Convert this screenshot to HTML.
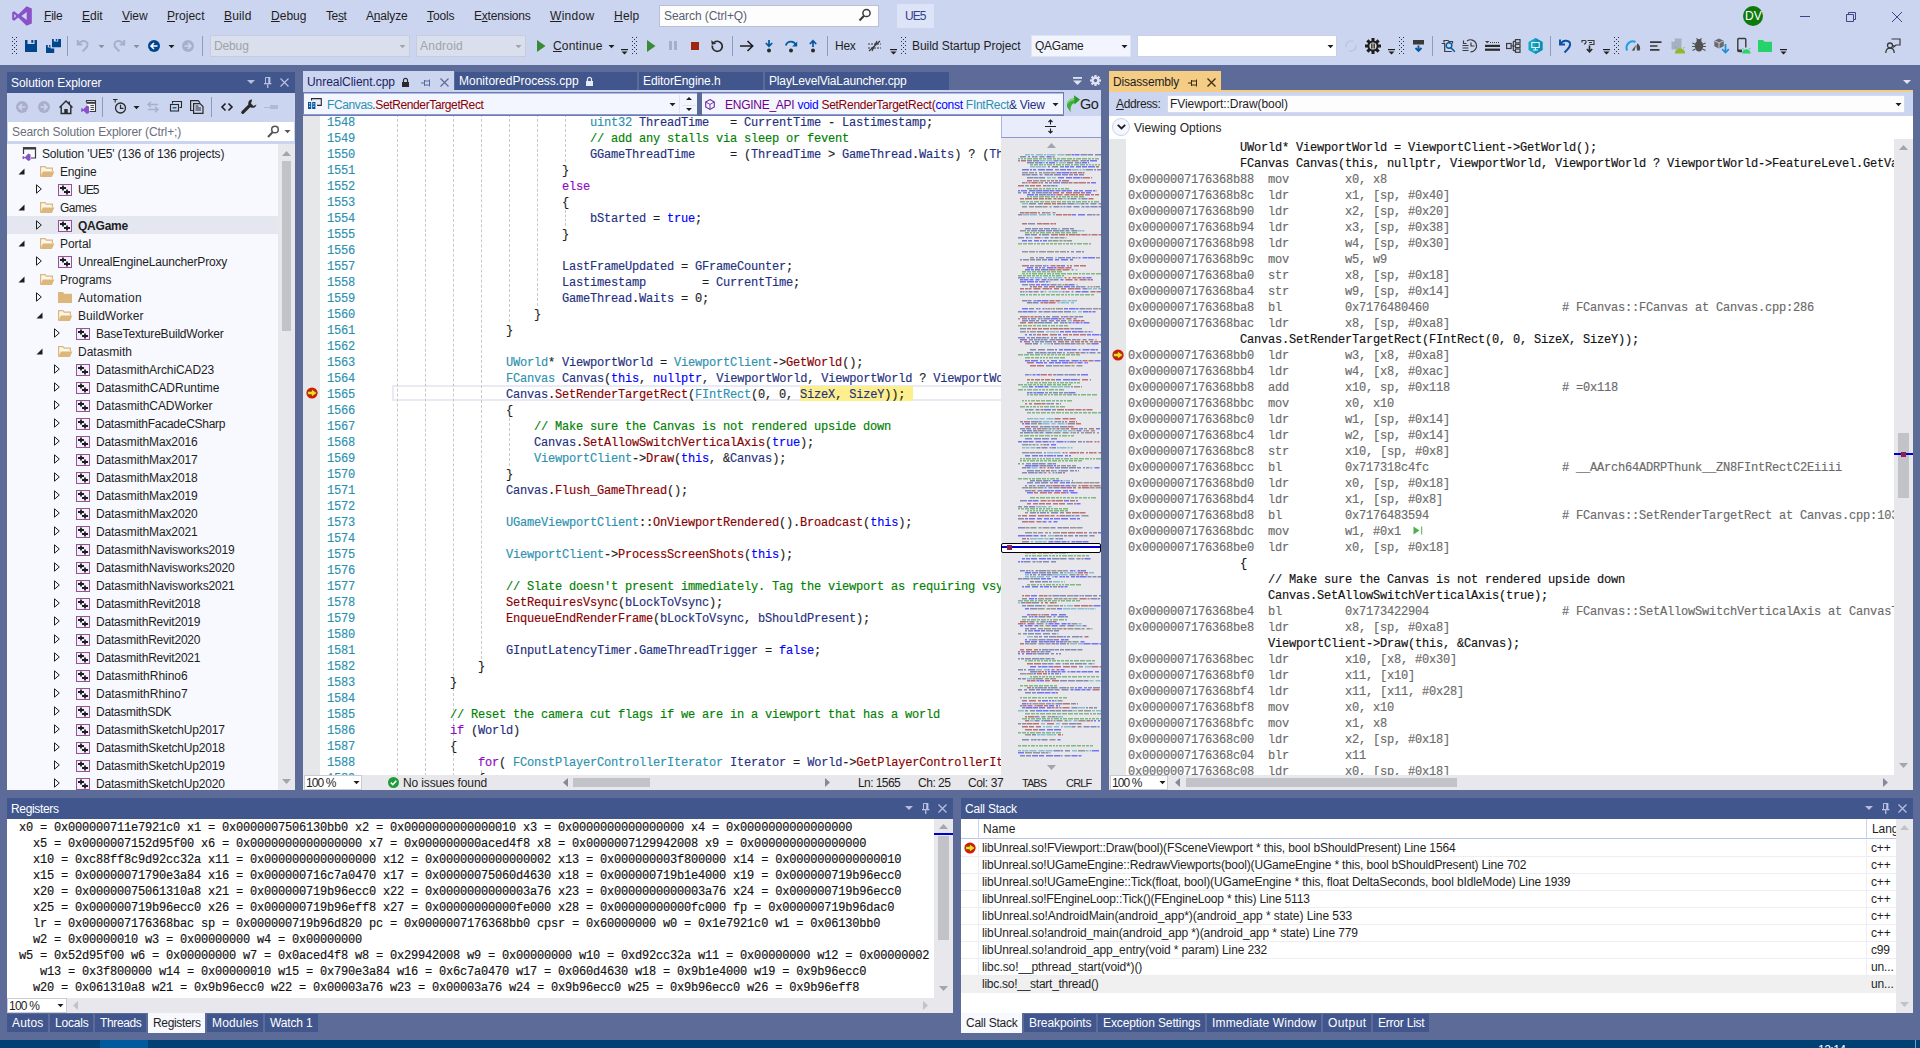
<!DOCTYPE html><html><head><meta charset="utf-8"><title>UE5 - Microsoft Visual Studio</title><style>
*{box-sizing:border-box;margin:0;padding:0}
html,body{width:1920px;height:1048px;overflow:hidden;background:#5d6b99}
body{position:relative;font-family:"Liberation Sans",sans-serif;font-size:12px;color:#1e1e1e}
div{position:absolute}
svg{position:absolute;overflow:visible}
.t{white-space:pre;line-height:16px;height:16px}
.ui{font-family:"Liberation Sans",sans-serif;font-size:12px;letter-spacing:-0.1px}
.mono{font-family:"Liberation Mono",monospace;font-size:12px;letter-spacing:-0.2px;white-space:pre;line-height:16px;height:16px;margin-top:1px}
.w{color:#fff}
.ttl{background:#40568d;color:#fff}
.lav{background:#ccd5f0}
.sb{background:#e8e8ec}
.th{background:#c2c3c9}
.k{color:#0000ff}.c{color:#008000}.ty{color:#2b91af}.f{color:#880000}.v{color:#1f2f80}.p{color:#8f08c4}.m{color:#6f008a}
.ln{color:#2b91af}
.g{color:#6a6a6a}
u{text-decoration:underline;text-underline-offset:1px}
.tr{letter-spacing:-0.2px}
.nv{letter-spacing:-0.4px}
.cs{letter-spacing:-0.15px}
.pt,.tr,.nv{margin-top:1px}
.mono{-webkit-text-stroke:0.15px currentColor}
.sm{letter-spacing:-0.45px}
.bt{letter-spacing:-0.25px}

</style></head><body>
<div class="lav" style="left:0px;top:0px;width:1920px;height:65px;"></div>
<svg style="left:12px;top:6px" width="20" height="20" viewBox="0 0 20 20"><path d="M14.6 0.3L19.8 2.6V17.4L14.6 19.7L6.2 11.6L2.2 14.7L0.2 13.7V6.3L2.2 5.3L6.2 8.4Z M14.7 5.9L9.4 10L14.7 14.1Z M2.2 7.9V12.1L4.4 10Z" fill="#8a52c8" fill-rule="evenodd"/></svg>
<div class="t ui mn" style="left:44px;top:8px;;letter-spacing:-0.19px"><u>F</u>ile</div>
<div class="t ui mn" style="left:82px;top:8px;;letter-spacing:-0.03px"><u>E</u>dit</div>
<div class="t ui mn" style="left:122px;top:8px;;letter-spacing:-0.05px"><u>V</u>iew</div>
<div class="t ui mn" style="left:167px;top:8px;;letter-spacing:0.02px"><u>P</u>roject</div>
<div class="t ui mn" style="left:224px;top:8px;;letter-spacing:0.16px"><u>B</u>uild</div>
<div class="t ui mn" style="left:271px;top:8px;;letter-spacing:0.03px"><u>D</u>ebug</div>
<div class="t ui mn" style="left:326px;top:8px;;letter-spacing:-0.38px">Te<u>s</u>t</div>
<div class="t ui mn" style="left:366px;top:8px;;letter-spacing:-0.17px">A<u>n</u>alyze</div>
<div class="t ui mn" style="left:427px;top:8px;;letter-spacing:-0.10px"><u>T</u>ools</div>
<div class="t ui mn" style="left:474px;top:8px;;letter-spacing:-0.22px">E<u>x</u>tensions</div>
<div class="t ui mn" style="left:550px;top:8px;;letter-spacing:0.30px"><u>W</u>indow</div>
<div class="t ui mn" style="left:614px;top:8px;;letter-spacing:0.20px"><u>H</u>elp</div>
<div style="left:659px;top:5px;width:220px;height:22px;background:#fdfdfe;border:1px solid #b9c0d9"></div>
<div class="t ui" style="left:664px;top:8px;color:#5a5f6e;letter-spacing:-0.09px">Search (Ctrl+Q)</div>
<svg style="left:858px;top:8px" width="14" height="14" viewBox="0 0 14 14"><circle cx="8.5" cy="5" r="3.6" fill="none" stroke="#3a3a3a" stroke-width="1.5"/><path d="M6 7.8L1.5 12.5" stroke="#3a3a3a" stroke-width="2"/></svg>
<div style="left:897px;top:4px;width:37px;height:24px;background:#dee4f8"></div>
<div class="t ui" style="left:905px;top:8px;color:#33408a;letter-spacing:-0.95px">UE5</div>
<div style="left:1743px;top:6px;width:20px;height:20px;background:#0e7a0d;border-radius:10px"></div>
<div class="t ui" style="left:1745px;top:8px;color:#fff;font-size:12px;letter-spacing:0.16px">DV</div>
<div style="left:1800px;top:16px;width:10px;height:1px;background:#3c4787"></div>
<svg style="left:1846px;top:12px" width="10" height="10" viewBox="0 0 10 10"><path d="M0.500 2.500h7v7h-7z M2.500 2.500v-2h7v7h-2" fill="none" stroke="#3c4787" stroke-width="1"/></svg>
<svg style="left:1892px;top:12px" width="10" height="10" viewBox="0 0 10 10"><path d="M0 0l10 10M10 0l-10 10" stroke="#3c4787" stroke-width="1" fill="none"/></svg>
<svg style="left:12px;top:37px" width="5" height="18" viewBox="0 0 5 18"><rect x="0" y="0" width="1" height="1" fill="#2a2d3a"/><rect x="4" y="0" width="1" height="1" fill="#2a2d3a"/><rect x="2" y="2" width="1" height="1" fill="#2a2d3a"/><rect x="0" y="4" width="1" height="1" fill="#2a2d3a"/><rect x="4" y="4" width="1" height="1" fill="#2a2d3a"/><rect x="2" y="6" width="1" height="1" fill="#2a2d3a"/><rect x="0" y="8" width="1" height="1" fill="#2a2d3a"/><rect x="4" y="8" width="1" height="1" fill="#2a2d3a"/><rect x="2" y="10" width="1" height="1" fill="#2a2d3a"/><rect x="0" y="12" width="1" height="1" fill="#2a2d3a"/><rect x="4" y="12" width="1" height="1" fill="#2a2d3a"/><rect x="2" y="14" width="1" height="1" fill="#2a2d3a"/><rect x="0" y="16" width="1" height="1" fill="#2a2d3a"/><rect x="4" y="16" width="1" height="1" fill="#2a2d3a"/></svg>
<svg style="left:25px;top:40px" width="12" height="12" viewBox="0 0 12 12"><path d="M0 0h2.5v4h7v-4H12v12H0z" fill="#00468c"/><rect x="6.3" y="0" width="2" height="2.8" fill="#00468c"/></svg>
<svg style="left:46px;top:39px" width="15" height="14" viewBox="0 0 15 14"><path d="M6 0h1.8v2.6h4.4V0H15v8.3H6z" fill="#00468c"/><rect x="9.8" y="0" width="1.4" height="1.8" fill="#00468c"/><path d="M0 6h1.8v2.6h3v1h3.4V14H0z" fill="#00468c"/><rect x="3" y="6" width="1.4" height="1.8" fill="#00468c"/></svg>
<div style="left:67px;top:36px;width:1px;height:20px;background:#8e9bbc"></div>
<svg style="left:77px;top:39px" width="13" height="13" viewBox="0 0 13 13"><path d="M0.8 1v4.5h4.5" fill="none" stroke="#a9aec8" stroke-width="2"/><path d="M1.5 5C3.5 1.5 8 1 10 3.5c1.8 2.4 0.2 5-4.5 8.8" fill="none" stroke="#a9aec8" stroke-width="2"/></svg>
<svg style="left:98px;top:45px" width="7" height="4" viewBox="0 0 7 4"><path d="M0.500 0h6l-3 3.200z" fill="#8d8f98"/></svg>
<svg style="left:112px;top:39px" width="13" height="13" viewBox="0 0 13 13"><path d="M12.2 1v4.5h-4.5" fill="none" stroke="#a9aec8" stroke-width="2"/><path d="M11.5 5C9.500 1.5 5 1 3 3.5c-1.8 2.400-0.200 5 4.500 8.800" fill="none" stroke="#a9aec8" stroke-width="2"/></svg>
<svg style="left:133px;top:45px" width="7" height="4" viewBox="0 0 7 4"><path d="M0.500 0h6l-3 3.200z" fill="#8d8f98"/></svg>
<svg style="left:148px;top:40px" width="12" height="12" viewBox="0 0 12 12"><circle cx="6" cy="6" r="6" fill="#00468c"/><path d="M9.5 6H3.300M6 3L3 6l3 3" fill="none" stroke="#fff" stroke-width="1.6"/></svg>
<svg style="left:168px;top:45px" width="7" height="4" viewBox="0 0 7 4"><path d="M0.500 0h6l-3 3.200z" fill="#1e1e1e"/></svg>
<svg style="left:182px;top:40px" width="12" height="12" viewBox="0 0 12 12"><circle cx="6" cy="6" r="6" fill="#a9aec9"/><path d="M2.500 6h6.200M6 3l3 3-3 3" fill="none" stroke="#ccd5f0" stroke-width="1.6"/></svg>
<div style="left:202px;top:36px;width:1px;height:20px;background:#8e9bbc"></div>
<div style="left:210px;top:35px;width:200px;height:22px;background:#d9dfec;border:1px solid #c6ccdc"></div>
<div class="t ui" style="left:214px;top:38px;color:#a0a3a8;letter-spacing:-0.14px">Debug</div>
<svg style="left:399px;top:45px" width="7" height="4" viewBox="0 0 7 4"><path d="M0.500 0h6l-3 3.200z" fill="#a0a3a8"/></svg>
<div style="left:416px;top:35px;width:110px;height:22px;background:#d9dfec;border:1px solid #c6ccdc"></div>
<div class="t ui" style="left:420px;top:38px;color:#a0a3a8;letter-spacing:0.23px">Android</div>
<svg style="left:515px;top:45px" width="7" height="4" viewBox="0 0 7 4"><path d="M0.500 0h6l-3 3.200z" fill="#a0a3a8"/></svg>
<svg style="left:537px;top:40px" width="9" height="12" viewBox="0 0 9 12"><path d="M0 0v12l8.500-6z" fill="#388a34"/></svg>
<div class="t ui" style="left:553px;top:38px;;letter-spacing:0.18px"><u>C</u>ontinue</div>
<svg style="left:608px;top:45px" width="7" height="4" viewBox="0 0 7 4"><path d="M0.500 0h6l-3 3.200z" fill="#1e1e1e"/></svg>
<svg style="left:621px;top:49px" width="7" height="6" viewBox="0 0 7 6"><rect x="0" y="0" width="7" height="1.2" fill="#1e1e1e"/><path d="M0.5 2.6h6l-3 3z" fill="#1e1e1e"/></svg>
<svg style="left:632px;top:37px" width="5" height="18" viewBox="0 0 5 18"><rect x="0" y="0" width="1" height="1" fill="#2a2d3a"/><rect x="4" y="0" width="1" height="1" fill="#2a2d3a"/><rect x="2" y="2" width="1" height="1" fill="#2a2d3a"/><rect x="0" y="4" width="1" height="1" fill="#2a2d3a"/><rect x="4" y="4" width="1" height="1" fill="#2a2d3a"/><rect x="2" y="6" width="1" height="1" fill="#2a2d3a"/><rect x="0" y="8" width="1" height="1" fill="#2a2d3a"/><rect x="4" y="8" width="1" height="1" fill="#2a2d3a"/><rect x="2" y="10" width="1" height="1" fill="#2a2d3a"/><rect x="0" y="12" width="1" height="1" fill="#2a2d3a"/><rect x="4" y="12" width="1" height="1" fill="#2a2d3a"/><rect x="2" y="14" width="1" height="1" fill="#2a2d3a"/><rect x="0" y="16" width="1" height="1" fill="#2a2d3a"/><rect x="4" y="16" width="1" height="1" fill="#2a2d3a"/></svg>
<svg style="left:647px;top:40px" width="9" height="12" viewBox="0 0 9 12"><path d="M0 0v12l8.500-6z" fill="#388a34"/></svg>
<div style="left:669px;top:41px;width:3px;height:9px;background:#a8adc8"></div>
<div style="left:674px;top:41px;width:3px;height:9px;background:#a8adc8"></div>
<div style="left:691px;top:42px;width:8px;height:8px;background:#a1260d"></div>
<svg style="left:710px;top:39px" width="14" height="14" viewBox="0 0 14 14"><path d="M4.200 3.300A5 5 0 1 1 2.300 6.500" fill="none" stroke="#2a2a2a" stroke-width="1.7"/><path d="M1.200 1.200l0.600 4.600 4.400-1z" fill="#2a2a2a"/></svg>
<div style="left:732px;top:36px;width:1px;height:20px;background:#8e9bbc"></div>
<svg style="left:740px;top:40px" width="14" height="12" viewBox="0 0 14 12"><path d="M0 6h12.500M7.500 1l5.200 5-5.200 5" fill="none" stroke="#1e1e1e" stroke-width="1.6"/></svg>
<svg style="left:765px;top:40px" width="8" height="13" viewBox="0 0 8 13"><path d="M4 0v6M0.800 3l3.200 3.200L7.200 3" fill="none" stroke="#005a9e" stroke-width="1.7"/><circle cx="4" cy="10.600" r="2" fill="#2a2a2a"/></svg>
<svg style="left:785px;top:40px" width="13" height="13" viewBox="0 0 13 13"><path d="M0.800 5.500C2.500 0.500 9 0.500 10.800 5" fill="none" stroke="#005a9e" stroke-width="1.800"/><path d="M12.200 1.500v5h-5z" fill="#005a9e"/><circle cx="6" cy="10.600" r="2" fill="#2a2a2a"/></svg>
<svg style="left:809px;top:40px" width="8" height="13" viewBox="0 0 8 13"><path d="M4 7V1M0.800 4L4 0.800 7.200 4" fill="none" stroke="#005a9e" stroke-width="1.700"/><circle cx="4" cy="10.600" r="2" fill="#2a2a2a"/></svg>
<div style="left:827px;top:36px;width:1px;height:20px;background:#8e9bbc"></div>
<div class="t ui" style="left:835px;top:38px;;letter-spacing:-0.28px">Hex</div>
<svg style="left:867px;top:39px" width="15" height="14" viewBox="0 0 15 14"><path d="M2 12L13 2M5 12L10 2" stroke="#3a3a3a" stroke-width="1.200" fill="none"/><path d="M1 5h13M1 9h13" stroke="#3a3a3a" stroke-width="1" stroke-dasharray="2 1" fill="none"/></svg>
<svg style="left:890px;top:49px" width="7" height="6" viewBox="0 0 7 6"><rect x="0" y="0" width="7" height="1.2" fill="#1e1e1e"/><path d="M0.5 2.6h6l-3 3z" fill="#1e1e1e"/></svg>
<svg style="left:901px;top:37px" width="5" height="18" viewBox="0 0 5 18"><rect x="0" y="0" width="1" height="1" fill="#2a2d3a"/><rect x="4" y="0" width="1" height="1" fill="#2a2d3a"/><rect x="2" y="2" width="1" height="1" fill="#2a2d3a"/><rect x="0" y="4" width="1" height="1" fill="#2a2d3a"/><rect x="4" y="4" width="1" height="1" fill="#2a2d3a"/><rect x="2" y="6" width="1" height="1" fill="#2a2d3a"/><rect x="0" y="8" width="1" height="1" fill="#2a2d3a"/><rect x="4" y="8" width="1" height="1" fill="#2a2d3a"/><rect x="2" y="10" width="1" height="1" fill="#2a2d3a"/><rect x="0" y="12" width="1" height="1" fill="#2a2d3a"/><rect x="4" y="12" width="1" height="1" fill="#2a2d3a"/><rect x="2" y="14" width="1" height="1" fill="#2a2d3a"/><rect x="0" y="16" width="1" height="1" fill="#2a2d3a"/><rect x="4" y="16" width="1" height="1" fill="#2a2d3a"/></svg>
<div class="t ui" style="left:912px;top:38px;;letter-spacing:-0.04px">Build Startup Project</div>
<div style="left:1031px;top:35px;width:100px;height:22px;background:#f2f5fd;border:1px solid #dde4f7"></div>
<div class="t ui" style="left:1035px;top:38px;;letter-spacing:-0.25px">QAGame</div>
<svg style="left:1121px;top:45px" width="7" height="4" viewBox="0 0 7 4"><path d="M0.500 0h6l-3 3.200z" fill="#1e1e1e"/></svg>
<div style="left:1137px;top:35px;width:200px;height:22px;background:#fff;border:1px solid #c8d0e8"></div>
<svg style="left:1327px;top:45px" width="7" height="4" viewBox="0 0 7 4"><path d="M0.500 0h6l-3 3.200z" fill="#1e1e1e"/></svg>
<svg style="left:1344px;top:39px" width="14" height="14" viewBox="0 0 14 14"><path d="M2 8A5.200 5.200 0 0 1 9 2.200M12 6A5.200 5.200 0 0 1 5 11.800" fill="none" stroke="#bcc3dc" stroke-width="1.300"/></svg>
<svg style="left:1365px;top:38px" width="16" height="16" viewBox="0 0 16 16"><g transform="translate(8,8)"><rect x="-1.500" y="-8" width="3" height="16" fill="#1e1e1e" transform="rotate(0)"/><rect x="-1.500" y="-8" width="3" height="16" fill="#1e1e1e" transform="rotate(45)"/><rect x="-1.500" y="-8" width="3" height="16" fill="#1e1e1e" transform="rotate(90)"/><rect x="-1.500" y="-8" width="3" height="16" fill="#1e1e1e" transform="rotate(135)"/><circle r="5.600" fill="#1e1e1e"/><circle r="3.600" fill="#d8d8d8"/><rect x="-1.800" y="-2.500" width="1.300" height="5" fill="#1e1e1e"/><rect x="0.500" y="-2.500" width="1.300" height="5" fill="#1e1e1e"/></g></svg>
<svg style="left:1388px;top:49px" width="7" height="6" viewBox="0 0 7 6"><rect x="0" y="0" width="7" height="1.2" fill="#1e1e1e"/><path d="M0.5 2.6h6l-3 3z" fill="#1e1e1e"/></svg>
<svg style="left:1399px;top:37px" width="5" height="18" viewBox="0 0 5 18"><rect x="0" y="0" width="1" height="1" fill="#2a2d3a"/><rect x="4" y="0" width="1" height="1" fill="#2a2d3a"/><rect x="2" y="2" width="1" height="1" fill="#2a2d3a"/><rect x="0" y="4" width="1" height="1" fill="#2a2d3a"/><rect x="4" y="4" width="1" height="1" fill="#2a2d3a"/><rect x="2" y="6" width="1" height="1" fill="#2a2d3a"/><rect x="0" y="8" width="1" height="1" fill="#2a2d3a"/><rect x="4" y="8" width="1" height="1" fill="#2a2d3a"/><rect x="2" y="10" width="1" height="1" fill="#2a2d3a"/><rect x="0" y="12" width="1" height="1" fill="#2a2d3a"/><rect x="4" y="12" width="1" height="1" fill="#2a2d3a"/><rect x="2" y="14" width="1" height="1" fill="#2a2d3a"/><rect x="0" y="16" width="1" height="1" fill="#2a2d3a"/><rect x="4" y="16" width="1" height="1" fill="#2a2d3a"/></svg>
<svg style="left:1413px;top:40px" width="11" height="12" viewBox="0 0 11 12"><rect x="0" y="0" width="11" height="4.500" fill="#3a3a3a"/><path d="M5.500 5.500v5M2.500 8l3 3 3-3" fill="none" stroke="#005a9e" stroke-width="1.800"/></svg>
<div style="left:1432px;top:36px;width:1px;height:20px;background:#8e9bbc"></div>
<svg style="left:1441px;top:39px" width="15" height="14" viewBox="0 0 15 14"><path d="M3 3.500V1.500h4l1 1h3.500v2M0.700 4.500h3v8h7" fill="none" stroke="#3a3a3a" stroke-width="1.200"/><circle cx="8" cy="6.500" r="2.800" fill="#ccd5f0" stroke="#005a9e" stroke-width="1.400"/><path d="M10 8.800l3.800 4" stroke="#005a9e" stroke-width="1.600"/></svg>
<svg style="left:1462px;top:39px" width="15" height="14" viewBox="0 0 15 14"><path d="M5 2A6 6 0 1 1 8.500 12.800" fill="none" stroke="#3a3a3a" stroke-width="1.200"/><path d="M9 3.500V7h3.500" fill="none" stroke="#3a3a3a" stroke-width="1.200"/><path d="M0.500 6.500h6M0.500 9h6M0.500 11.500h6" stroke="#3a3a3a" stroke-width="1.100"/><path d="M1.500 1.500v3h3" fill="none" stroke="#3a3a3a" stroke-width="1.200"/></svg>
<svg style="left:1485px;top:41px" width="15" height="10" viewBox="0 0 15 10"><path d="M0 0h4.500L2.200 2.200z" fill="#3a3a3a"/><path d="M5 1.500h10" stroke="#3a3a3a" stroke-width="1" stroke-dasharray="1 1"/><rect x="0" y="3.800" width="15" height="2.200" fill="#2a2a2a"/><rect x="0" y="7.600" width="15" height="2.200" fill="#2a2a2a"/></svg>
<svg style="left:1506px;top:39px" width="15" height="14" viewBox="0 0 15 14"><rect x="0.600" y="4.500" width="4.500" height="5" fill="none" stroke="#3a3a3a" stroke-width="1.200"/><rect x="9.500" y="0.600" width="4.500" height="3.300" fill="none" stroke="#3a3a3a" stroke-width="1.200"/><rect x="9.500" y="5.300" width="4.500" height="3.300" fill="none" stroke="#3a3a3a" stroke-width="1.200"/><rect x="9.500" y="10" width="4.500" height="3.300" fill="none" stroke="#3a3a3a" stroke-width="1.200"/><path d="M5 7h4.500M7.300 2.300v9.400M7.300 2.300h2.200M7.300 11.700h2.200" fill="none" stroke="#3a3a3a" stroke-width="1.200"/></svg>
<svg style="left:1528px;top:38px" width="15" height="16" viewBox="0 0 15 16"><path d="M7.500 0l7 4v8l-7 4-7-4V4z" fill="#12a5c4"/><path d="M7.500 0l7 4v8l-7 4z" fill="#0b8fb0"/><rect x="3.800" y="4.500" width="7.400" height="5" fill="none" stroke="#e6f7fb" stroke-width="1.100"/><path d="M7.500 9.500v2.200M5 12h5" stroke="#e6f7fb" stroke-width="1.100"/></svg>
<div style="left:1550px;top:36px;width:1px;height:20px;background:#8e9bbc"></div>
<svg style="left:1559px;top:39px" width="13" height="14" viewBox="0 0 13 14"><path d="M1 0.500v5h5" fill="none" stroke="#0a4fa3" stroke-width="1.900"/><path d="M1.500 5C4 0.800 9.500 0.800 11 4c1.200 3-1.500 5.500-5.500 9.500" fill="none" stroke="#0a4fa3" stroke-width="1.900"/></svg>
<svg style="left:1581px;top:39px" width="14" height="14" viewBox="0 0 14 14"><path d="M0.800 1.500h3.200c1.500 0 1.500 3-1 3.800M1 1v2.500" fill="none" stroke="#3a3a3a" stroke-width="1.200"/><path d="M6.500 1.500h6.500v4h-4.500M8 3.500h3" fill="none" stroke="#3a3a3a" stroke-width="1.100"/><path d="M8.500 6.500v6M5.800 10l2.700 2.800 2.700-2.800" fill="none" stroke="#2a2a2a" stroke-width="1.600"/></svg>
<svg style="left:1603px;top:49px" width="7" height="6" viewBox="0 0 7 6"><rect x="0" y="0" width="7" height="1.2" fill="#1e1e1e"/><path d="M0.5 2.6h6l-3 3z" fill="#1e1e1e"/></svg>
<svg style="left:1614px;top:37px" width="5" height="18" viewBox="0 0 5 18"><rect x="0" y="0" width="1" height="1" fill="#2a2d3a"/><rect x="4" y="0" width="1" height="1" fill="#2a2d3a"/><rect x="2" y="2" width="1" height="1" fill="#2a2d3a"/><rect x="0" y="4" width="1" height="1" fill="#2a2d3a"/><rect x="4" y="4" width="1" height="1" fill="#2a2d3a"/><rect x="2" y="6" width="1" height="1" fill="#2a2d3a"/><rect x="0" y="8" width="1" height="1" fill="#2a2d3a"/><rect x="4" y="8" width="1" height="1" fill="#2a2d3a"/><rect x="2" y="10" width="1" height="1" fill="#2a2d3a"/><rect x="0" y="12" width="1" height="1" fill="#2a2d3a"/><rect x="4" y="12" width="1" height="1" fill="#2a2d3a"/><rect x="2" y="14" width="1" height="1" fill="#2a2d3a"/><rect x="0" y="16" width="1" height="1" fill="#2a2d3a"/><rect x="4" y="16" width="1" height="1" fill="#2a2d3a"/></svg>
<svg style="left:1626px;top:40px" width="15" height="11" viewBox="0 0 15 11"><path d="M1.200 10.500A6.300 6.300 0 0 1 9.500 2" fill="none" stroke="#1ba1e2" stroke-width="2"/><path d="M11.300 3.300A6.300 6.300 0 0 1 13.800 10.500h-2.800l-0.500-4z" fill="#4a4a4a"/><path d="M5.800 10.500l4.400-5.800-1.900 6z" fill="#4a4a4a"/></svg>
<svg style="left:1650px;top:41px" width="12" height="10" viewBox="0 0 12 10"><path d="M0 1.200h11.500M0 5h7.500M0 8.800h9.500" stroke="#3a3a3a" stroke-width="1.700"/></svg>
<svg style="left:1671px;top:38px" width="15" height="16" viewBox="0 0 15 16"><path d="M0.500 3.500L3.500 0.500H10.500V11.500H0.500z" fill="#a7afc4"/><path d="M0.500 3.500h3v-3z" fill="#dfe4f2"/><path d="M3.800 15.500a5 5 0 0 1 10.400 0z" fill="#97b52c"/><path d="M5.500 10.500L4.300 9M12.500 10.500l1.200-1.500" stroke="#97b52c" stroke-width="1"/></svg>
<svg style="left:1692px;top:38px" width="14" height="15" viewBox="0 0 14 15"><ellipse cx="7" cy="8" rx="4.200" ry="5.600" fill="#525252"/><ellipse cx="7" cy="2.800" rx="2.500" ry="1.800" fill="#525252"/><path d="M0.500 5l3 1.500M13.500 5l-3 1.500M0 8.500h3M14 8.500h-3M0.500 12.500l3-1.500M13.500 12.500l-3-1.500M4.500 0.300l1.500 1.800M9.500 0.300L8 2.100" stroke="#525252" stroke-width="1.200"/></svg>
<svg style="left:1714px;top:38px" width="16" height="16" viewBox="0 0 16 16"><path d="M5 0.500l4.800 2.200v5.600L5 10.500 0.300 8.300V2.700z" fill="#6a6a6a"/><path d="M0.300 2.700L5 5l4.800-2.300M5 5v5.500" fill="none" stroke="#ccd5f0" stroke-width="0.900"/><path d="M11.500 6v8.500M8.200 11.200l3.300 3.300 3.300-3.300" fill="none" stroke="#1c8fd6" stroke-width="1.700"/></svg>
<svg style="left:1737px;top:38px" width="15" height="16" viewBox="0 0 15 16"><path d="M0.800 13.500V1.500a1 1 0 0 1 1-1h6a1 1 0 0 1 1 1v8" fill="none" stroke="#3a3a3a" stroke-width="1.400"/><path d="M0.800 11.500h4.200v2.800H1.800a1 1 0 0 1-1-1z" fill="#3a3a3a"/><path d="M5 15.500a4.300 4.300 0 0 1 8.600 0z" fill="#2bd46b"/><path d="M6.500 11.300L5.500 10M12.100 11.300l1-1.300" stroke="#2bd46b" stroke-width="1"/></svg>
<svg style="left:1758px;top:40px" width="14" height="12" viewBox="0 0 14 12"><path d="M0 0h5l1.500 1.800H14V12H0z" fill="#25d36a"/></svg>
<svg style="left:1780px;top:49px" width="7" height="6" viewBox="0 0 7 6"><rect x="0" y="0" width="7" height="1.2" fill="#1e1e1e"/><path d="M0.5 2.6h6l-3 3z" fill="#1e1e1e"/></svg>
<svg style="left:1885px;top:38px" width="16" height="16" viewBox="0 0 16 16"><path d="M6.500 1h8.500v6h-4l-2.200 2V7" fill="none" stroke="#3a3a3a" stroke-width="1.200"/><circle cx="5" cy="7.500" r="2.500" fill="none" stroke="#3a3a3a" stroke-width="1.300"/><path d="M0.700 15c0.300-3.500 2-4.800 4.300-4.800s4 1.300 4.300 4.800" fill="none" stroke="#3a3a3a" stroke-width="1.300"/></svg>
<div class="ttl" style="left:7px;top:72px;width:288px;height:21px;"></div>
<div class="t ui w pt" style="left:11px;top:74px;;letter-spacing:-0.05px">Solution Explorer</div>
<svg style="left:247px;top:80px" width="8" height="4" viewBox="0 0 8 4"><path d="M0 0h8l-4.0 4z" fill="#b4bcdf"/></svg>
<svg style="left:264px;top:77px" width="8" height="11" viewBox="0 0 8 11"><path d="M1.500 6.500V0.500h4" fill="none" stroke="#b9c1e2" stroke-width="1"/><rect x="4.200" y="0" width="2.200" height="6.500" fill="#b9c1e2"/><rect x="0" y="6" width="7.400" height="1.300" fill="#b9c1e2"/><rect x="3.100" y="7.300" width="1.300" height="3.700" fill="#b9c1e2"/></svg>
<svg style="left:279.5px;top:78px" width="9" height="9" viewBox="0 0 9 9"><path d="M0.5 0.5L8.5 8.5M8.5 0.5L0.5 8.5" stroke="#b9c1e2" stroke-width="1.2" fill="none"/></svg>
<div class="lav" style="left:7px;top:93px;width:288px;height:29px;"></div>
<svg style="left:16px;top:101px" width="12" height="12" viewBox="0 0 12 12"><circle cx="6" cy="6" r="6" fill="#a9aec9"/><path d="M9.500 6H3.300M6 3L3 6l3 3" fill="none" stroke="#ccd5f0" stroke-width="1.600"/></svg>
<svg style="left:38px;top:101px" width="12" height="12" viewBox="0 0 12 12"><circle cx="6" cy="6" r="6" fill="#a9aec9"/><path d="M2.500 6h6.200M6 3l3 3-3 3" fill="none" stroke="#ccd5f0" stroke-width="1.600"/></svg>
<svg style="left:59px;top:100px" width="14" height="14" viewBox="0 0 14 14"><path d="M0.500 7.500L7 1l6.500 6.500M2.200 6.500v7h9.600v-7M10.300 1.500v2.300" fill="none" stroke="#2a2a2a" stroke-width="1.400"/><rect x="5.300" y="9" width="3.400" height="4.500" fill="#2a2a2a"/></svg>
<svg style="left:81px;top:100px" width="15" height="14" viewBox="0 0 15 14"><path d="M5.500 2.500v-2h9v11h-6" fill="#f5f7ff" stroke="#3a3a3a" stroke-width="1.100"/><path d="M5.500 2.800h9" stroke="#3a3a3a" stroke-width="2"/><path d="M9.500 5.500h3.500M9.500 7.500h3.500M9.500 9.500h3.500" stroke="#3a3a3a" stroke-width="0.900"/><path d="M5.800 5.500l2.200 1v6.500l-2.200 1-3.400-3.300-1.500 1.200L0.200 11.500V8.500l0.700-0.400 1.500 1.200z" fill="#8a52c8"/></svg>
<div style="left:102px;top:97px;width:1px;height:20px;background:#8e9bbc"></div>
<svg style="left:113px;top:99px" width="14" height="15" viewBox="0 0 14 15"><path d="M0 0.500h4.500M2.200 0.500v3" stroke="#2a2a2a" stroke-width="1.100" fill="none"/><circle cx="7.500" cy="9" r="5" fill="none" stroke="#2a2a2a" stroke-width="1.300"/><path d="M7.500 5.800V9.300h3" fill="none" stroke="#2a2a2a" stroke-width="1.200"/></svg>
<svg style="left:133px;top:106px" width="7" height="4" viewBox="0 0 7 4"><path d="M0.500 0h6l-3 3.200z" fill="#1e1e1e"/></svg>
<svg style="left:147px;top:101px" width="12" height="12" viewBox="0 0 12 12"><path d="M1 3.500h10M4 0.800L1 3.500 4 6.200M11 8.500H1M8 5.800l3 2.700-3 2.700" fill="none" stroke="#a9aec9" stroke-width="1.400"/></svg>
<svg style="left:170px;top:101px" width="12" height="11" viewBox="0 0 12 11"><path d="M2.500 2.500V0.500h9v6h-2" fill="none" stroke="#2a2a2a" stroke-width="1.100"/><rect x="0.500" y="3.500" width="8" height="6.500" fill="none" stroke="#2a2a2a" stroke-width="1.100"/><path d="M2.500 6.800h4" stroke="#005a9e" stroke-width="1.400"/></svg>
<svg style="left:190px;top:100px" width="14" height="14" viewBox="0 0 14 14"><path d="M3 10.500H0.600V0.600h7.400l2 2" fill="none" stroke="#2a2a2a" stroke-width="1.200"/><path d="M3.600 3.600h6.400l3 3v6.800H3.600z" fill="none" stroke="#2a2a2a" stroke-width="1.200"/><path d="M5.500 8h5.500M5.500 10h5.500M5.500 6h3" stroke="#2a2a2a" stroke-width="1"/></svg>
<div style="left:211px;top:97px;width:1px;height:20px;background:#8e9bbc"></div>
<svg style="left:221px;top:103px" width="12" height="8" viewBox="0 0 12 8"><path d="M4.500 0.500L1 4l3.500 3.500M7.500 0.500L11 4 7.500 7.500" fill="none" stroke="#1e1e1e" stroke-width="1.600"/></svg>
<svg style="left:241px;top:99px" width="16" height="15" viewBox="0 0 16 15"><path d="M1.800 13.400L8.300 6.900" stroke="#2a2a2a" stroke-width="3.200" stroke-linecap="round"/><path d="M11.200 0.400a4.200 4.200 0 1 0 4.300 5.200l-3 1.300-2.500-2.500z" fill="#2a2a2a"/></svg>
<div style="left:264px;top:107px;width:6px;height:1px;background:#b3b9d3"></div>
<div style="left:270px;top:105px;width:8px;height:4px;background:#b3b9d3"></div>
<div class="lav" style="left:7px;top:122px;width:288px;height:22px;"></div>
<div style="left:8px;top:122px;width:286px;height:19px;background:#fff"></div>
<div class="t ui" style="left:12px;top:124px;color:#6a6e7c;letter-spacing:-0.12px">Search Solution Explorer (Ctrl+;)</div>
<svg style="left:267px;top:125px" width="13" height="13" viewBox="0 0 13 13"><circle cx="8" cy="4.500" r="3.300" fill="none" stroke="#555" stroke-width="1.500"/><path d="M5.800 7L1 12" stroke="#555" stroke-width="2"/></svg>
<svg style="left:284px;top:130px" width="7" height="4" viewBox="0 0 7 4"><path d="M0.500 0h6l-3 3.200z" fill="#555"/></svg>
<div style="left:7px;top:144px;width:288px;height:646px;background:#f7f9fe"></div>
<div class="sb" style="left:278px;top:144px;width:17px;height:646px;"></div>
<svg style="left:282px;top:151px" width="9" height="5" viewBox="0 0 9 5"><path d="M0 5h9l-4.5 -5z" fill="#a3a5ad"/></svg>
<svg style="left:282px;top:779px" width="9" height="5" viewBox="0 0 9 5"><path d="M0 0h9l-4.5 5z" fill="#a3a5ad"/></svg>
<div class="th" style="left:282px;top:161px;width:9px;height:170px;"></div>
<div style="left:7px;top:216px;width:271px;height:18px;background:#e4e6f0"></div>
<div style="left:7px;top:144px;width:271px;height:646px;overflow:hidden">
<svg style="left:15px;top:3px" width="15" height="14" viewBox="0 0 15 14"><path d="M1.500 7V1h12v10h-4.500" fill="none" stroke="#3a3a3a" stroke-width="1.200"/><path d="M1 1.300h13" stroke="#3a3a3a" stroke-width="2.400"/><path d="M6.300 6.500l2.200 1v5.500l-2.200 1-3.400-3-1.600 1.200-0.800-0.500V9.500l0.800-0.400 1.600 1.200z" fill="#8a52c8"/></svg>
<div class="t ui tr" style="left:35px;top:1px;;letter-spacing:-0.16px">Solution 'UE5' (136 of 136 projects)</div>
<svg style="left:11px;top:24px" width="7" height="7" viewBox="0 0 7 7"><path d="M6.5 0.5v6h-6z" fill="#1e1e1e"/></svg>
<svg style="left:33px;top:22px" width="15" height="11" viewBox="0 0 15 11"><path d="M0.600 10.400V0.600h4.300l1.400 1.600h6.100v3" fill="#fbf6ea" stroke="#dcb67a" stroke-width="1.200"/><path d="M0.300 11l2.600-5.400h11.500l-2.500 5.400z" fill="#dcb67a"/></svg>
<div class="t ui tr" style="left:53px;top:19px;;letter-spacing:-0.16px">Engine</div>
<svg style="left:29px;top:40px" width="6" height="10" viewBox="0 0 6 10"><path d="M0.5 0.8v8.4L5.3 5z" fill="none" stroke="#1e1e1e" stroke-width="1"/></svg>
<svg style="left:51px;top:40px" width="14" height="12" viewBox="0 0 14 12"><rect x="0.500" y="0.500" width="13" height="11" fill="#eef0fa" stroke="#9b4f96" stroke-width="1"/><path d="M2 4h6M5 1.500v5M6 8h6M9 5.500v5" stroke="#1e1e1e" stroke-width="1.800" fill="none"/></svg>
<div class="t ui tr" style="left:71px;top:37px;;letter-spacing:-0.98px">UE5</div>
<svg style="left:11px;top:60px" width="7" height="7" viewBox="0 0 7 7"><path d="M6.5 0.5v6h-6z" fill="#1e1e1e"/></svg>
<svg style="left:33px;top:58px" width="15" height="11" viewBox="0 0 15 11"><path d="M0.600 10.400V0.600h4.300l1.400 1.600h6.100v3" fill="#fbf6ea" stroke="#dcb67a" stroke-width="1.200"/><path d="M0.300 11l2.600-5.400h11.500l-2.500 5.400z" fill="#dcb67a"/></svg>
<div class="t ui tr" style="left:53px;top:55px;;letter-spacing:-0.46px">Games</div>
<svg style="left:29px;top:76px" width="6" height="10" viewBox="0 0 6 10"><path d="M0.5 0.8v8.4L5.3 5z" fill="none" stroke="#1e1e1e" stroke-width="1"/></svg>
<svg style="left:51px;top:76px" width="14" height="12" viewBox="0 0 14 12"><rect x="0.500" y="0.500" width="13" height="11" fill="#eef0fa" stroke="#9b4f96" stroke-width="1"/><path d="M2 4h6M5 1.500v5M6 8h6M9 5.500v5" stroke="#1e1e1e" stroke-width="1.800" fill="none"/></svg>
<div class="t ui tr" style="left:71px;top:73px;font-weight:bold;letter-spacing:-0.23px">QAGame</div>
<svg style="left:11px;top:96px" width="7" height="7" viewBox="0 0 7 7"><path d="M6.5 0.5v6h-6z" fill="#1e1e1e"/></svg>
<svg style="left:33px;top:94px" width="15" height="11" viewBox="0 0 15 11"><path d="M0.600 10.400V0.600h4.300l1.400 1.600h6.100v3" fill="#fbf6ea" stroke="#dcb67a" stroke-width="1.200"/><path d="M0.300 11l2.600-5.400h11.500l-2.500 5.400z" fill="#dcb67a"/></svg>
<div class="t ui tr" style="left:53px;top:91px;;letter-spacing:-0.03px">Portal</div>
<svg style="left:29px;top:112px" width="6" height="10" viewBox="0 0 6 10"><path d="M0.5 0.8v8.4L5.3 5z" fill="none" stroke="#1e1e1e" stroke-width="1"/></svg>
<svg style="left:51px;top:112px" width="14" height="12" viewBox="0 0 14 12"><rect x="0.500" y="0.500" width="13" height="11" fill="#eef0fa" stroke="#9b4f96" stroke-width="1"/><path d="M2 4h6M5 1.500v5M6 8h6M9 5.500v5" stroke="#1e1e1e" stroke-width="1.800" fill="none"/></svg>
<div class="t ui tr" style="left:71px;top:109px;;letter-spacing:-0.17px">UnrealEngineLauncherProxy</div>
<svg style="left:11px;top:132px" width="7" height="7" viewBox="0 0 7 7"><path d="M6.5 0.5v6h-6z" fill="#1e1e1e"/></svg>
<svg style="left:33px;top:130px" width="15" height="11" viewBox="0 0 15 11"><path d="M0.600 10.400V0.600h4.300l1.400 1.600h6.100v3" fill="#fbf6ea" stroke="#dcb67a" stroke-width="1.200"/><path d="M0.300 11l2.600-5.400h11.500l-2.500 5.400z" fill="#dcb67a"/></svg>
<div class="t ui tr" style="left:53px;top:127px;;letter-spacing:-0.09px">Programs</div>
<svg style="left:29px;top:148px" width="6" height="10" viewBox="0 0 6 10"><path d="M0.5 0.8v8.4L5.3 5z" fill="none" stroke="#1e1e1e" stroke-width="1"/></svg>
<svg style="left:51px;top:148px" width="14" height="11" viewBox="0 0 14 11"><path d="M0 11V0h5l1.400 1.800H14V11z" fill="#dcb67a"/></svg>
<div class="t ui tr" style="left:71px;top:145px;;letter-spacing:0.33px">Automation</div>
<svg style="left:29px;top:168px" width="7" height="7" viewBox="0 0 7 7"><path d="M6.5 0.5v6h-6z" fill="#1e1e1e"/></svg>
<svg style="left:51px;top:166px" width="15" height="11" viewBox="0 0 15 11"><path d="M0.600 10.400V0.600h4.300l1.400 1.600h6.100v3" fill="#fbf6ea" stroke="#dcb67a" stroke-width="1.200"/><path d="M0.300 11l2.600-5.400h11.500l-2.500 5.400z" fill="#dcb67a"/></svg>
<div class="t ui tr" style="left:71px;top:163px;;letter-spacing:0.03px">BuildWorker</div>
<svg style="left:47px;top:184px" width="6" height="10" viewBox="0 0 6 10"><path d="M0.5 0.8v8.4L5.3 5z" fill="none" stroke="#1e1e1e" stroke-width="1"/></svg>
<svg style="left:69px;top:184px" width="14" height="12" viewBox="0 0 14 12"><rect x="0.500" y="0.500" width="13" height="11" fill="#eef0fa" stroke="#9b4f96" stroke-width="1"/><path d="M2 4h6M5 1.500v5M6 8h6M9 5.500v5" stroke="#1e1e1e" stroke-width="1.800" fill="none"/></svg>
<div class="t ui tr" style="left:89px;top:181px;;letter-spacing:-0.19px">BaseTextureBuildWorker</div>
<svg style="left:29px;top:204px" width="7" height="7" viewBox="0 0 7 7"><path d="M6.5 0.5v6h-6z" fill="#1e1e1e"/></svg>
<svg style="left:51px;top:202px" width="15" height="11" viewBox="0 0 15 11"><path d="M0.600 10.400V0.600h4.300l1.400 1.600h6.100v3" fill="#fbf6ea" stroke="#dcb67a" stroke-width="1.200"/><path d="M0.300 11l2.600-5.400h11.500l-2.500 5.400z" fill="#dcb67a"/></svg>
<div class="t ui tr" style="left:71px;top:199px;;letter-spacing:-0.01px">Datasmith</div>
<svg style="left:47px;top:220px" width="6" height="10" viewBox="0 0 6 10"><path d="M0.5 0.8v8.4L5.3 5z" fill="none" stroke="#1e1e1e" stroke-width="1"/></svg>
<svg style="left:69px;top:220px" width="14" height="12" viewBox="0 0 14 12"><rect x="0.500" y="0.500" width="13" height="11" fill="#eef0fa" stroke="#9b4f96" stroke-width="1"/><path d="M2 4h6M5 1.500v5M6 8h6M9 5.500v5" stroke="#1e1e1e" stroke-width="1.800" fill="none"/></svg>
<div class="t ui tr" style="left:89px;top:217px;;letter-spacing:-0.10px">DatasmithArchiCAD23</div>
<svg style="left:47px;top:238px" width="6" height="10" viewBox="0 0 6 10"><path d="M0.5 0.8v8.4L5.3 5z" fill="none" stroke="#1e1e1e" stroke-width="1"/></svg>
<svg style="left:69px;top:238px" width="14" height="12" viewBox="0 0 14 12"><rect x="0.500" y="0.500" width="13" height="11" fill="#eef0fa" stroke="#9b4f96" stroke-width="1"/><path d="M2 4h6M5 1.500v5M6 8h6M9 5.500v5" stroke="#1e1e1e" stroke-width="1.800" fill="none"/></svg>
<div class="t ui tr" style="left:89px;top:235px;;letter-spacing:-0.03px">DatasmithCADRuntime</div>
<svg style="left:47px;top:256px" width="6" height="10" viewBox="0 0 6 10"><path d="M0.5 0.8v8.4L5.3 5z" fill="none" stroke="#1e1e1e" stroke-width="1"/></svg>
<svg style="left:69px;top:256px" width="14" height="12" viewBox="0 0 14 12"><rect x="0.500" y="0.500" width="13" height="11" fill="#eef0fa" stroke="#9b4f96" stroke-width="1"/><path d="M2 4h6M5 1.500v5M6 8h6M9 5.500v5" stroke="#1e1e1e" stroke-width="1.800" fill="none"/></svg>
<div class="t ui tr" style="left:89px;top:253px;;letter-spacing:-0.08px">DatasmithCADWorker</div>
<svg style="left:47px;top:274px" width="6" height="10" viewBox="0 0 6 10"><path d="M0.5 0.8v8.4L5.3 5z" fill="none" stroke="#1e1e1e" stroke-width="1"/></svg>
<svg style="left:69px;top:274px" width="14" height="12" viewBox="0 0 14 12"><rect x="0.500" y="0.500" width="13" height="11" fill="#eef0fa" stroke="#9b4f96" stroke-width="1"/><path d="M2 4h6M5 1.500v5M6 8h6M9 5.500v5" stroke="#1e1e1e" stroke-width="1.800" fill="none"/></svg>
<div class="t ui tr" style="left:89px;top:271px;;letter-spacing:-0.26px">DatasmithFacadeCSharp</div>
<svg style="left:47px;top:292px" width="6" height="10" viewBox="0 0 6 10"><path d="M0.5 0.8v8.4L5.3 5z" fill="none" stroke="#1e1e1e" stroke-width="1"/></svg>
<svg style="left:69px;top:292px" width="14" height="12" viewBox="0 0 14 12"><rect x="0.500" y="0.500" width="13" height="11" fill="#eef0fa" stroke="#9b4f96" stroke-width="1"/><path d="M2 4h6M5 1.500v5M6 8h6M9 5.500v5" stroke="#1e1e1e" stroke-width="1.800" fill="none"/></svg>
<div class="t ui tr" style="left:89px;top:289px;;letter-spacing:-0.11px">DatasmithMax2016</div>
<svg style="left:47px;top:310px" width="6" height="10" viewBox="0 0 6 10"><path d="M0.5 0.8v8.4L5.3 5z" fill="none" stroke="#1e1e1e" stroke-width="1"/></svg>
<svg style="left:69px;top:310px" width="14" height="12" viewBox="0 0 14 12"><rect x="0.500" y="0.500" width="13" height="11" fill="#eef0fa" stroke="#9b4f96" stroke-width="1"/><path d="M2 4h6M5 1.500v5M6 8h6M9 5.500v5" stroke="#1e1e1e" stroke-width="1.800" fill="none"/></svg>
<div class="t ui tr" style="left:89px;top:307px;;letter-spacing:-0.11px">DatasmithMax2017</div>
<svg style="left:47px;top:328px" width="6" height="10" viewBox="0 0 6 10"><path d="M0.5 0.8v8.4L5.3 5z" fill="none" stroke="#1e1e1e" stroke-width="1"/></svg>
<svg style="left:69px;top:328px" width="14" height="12" viewBox="0 0 14 12"><rect x="0.500" y="0.500" width="13" height="11" fill="#eef0fa" stroke="#9b4f96" stroke-width="1"/><path d="M2 4h6M5 1.500v5M6 8h6M9 5.500v5" stroke="#1e1e1e" stroke-width="1.800" fill="none"/></svg>
<div class="t ui tr" style="left:89px;top:325px;;letter-spacing:-0.11px">DatasmithMax2018</div>
<svg style="left:47px;top:346px" width="6" height="10" viewBox="0 0 6 10"><path d="M0.5 0.8v8.4L5.3 5z" fill="none" stroke="#1e1e1e" stroke-width="1"/></svg>
<svg style="left:69px;top:346px" width="14" height="12" viewBox="0 0 14 12"><rect x="0.500" y="0.500" width="13" height="11" fill="#eef0fa" stroke="#9b4f96" stroke-width="1"/><path d="M2 4h6M5 1.500v5M6 8h6M9 5.500v5" stroke="#1e1e1e" stroke-width="1.800" fill="none"/></svg>
<div class="t ui tr" style="left:89px;top:343px;;letter-spacing:-0.11px">DatasmithMax2019</div>
<svg style="left:47px;top:364px" width="6" height="10" viewBox="0 0 6 10"><path d="M0.5 0.8v8.4L5.3 5z" fill="none" stroke="#1e1e1e" stroke-width="1"/></svg>
<svg style="left:69px;top:364px" width="14" height="12" viewBox="0 0 14 12"><rect x="0.500" y="0.500" width="13" height="11" fill="#eef0fa" stroke="#9b4f96" stroke-width="1"/><path d="M2 4h6M5 1.500v5M6 8h6M9 5.500v5" stroke="#1e1e1e" stroke-width="1.800" fill="none"/></svg>
<div class="t ui tr" style="left:89px;top:361px;;letter-spacing:-0.11px">DatasmithMax2020</div>
<svg style="left:47px;top:382px" width="6" height="10" viewBox="0 0 6 10"><path d="M0.5 0.8v8.4L5.3 5z" fill="none" stroke="#1e1e1e" stroke-width="1"/></svg>
<svg style="left:69px;top:382px" width="14" height="12" viewBox="0 0 14 12"><rect x="0.500" y="0.500" width="13" height="11" fill="#eef0fa" stroke="#9b4f96" stroke-width="1"/><path d="M2 4h6M5 1.500v5M6 8h6M9 5.500v5" stroke="#1e1e1e" stroke-width="1.800" fill="none"/></svg>
<div class="t ui tr" style="left:89px;top:379px;;letter-spacing:-0.11px">DatasmithMax2021</div>
<svg style="left:47px;top:400px" width="6" height="10" viewBox="0 0 6 10"><path d="M0.5 0.8v8.4L5.3 5z" fill="none" stroke="#1e1e1e" stroke-width="1"/></svg>
<svg style="left:69px;top:400px" width="14" height="12" viewBox="0 0 14 12"><rect x="0.500" y="0.500" width="13" height="11" fill="#eef0fa" stroke="#9b4f96" stroke-width="1"/><path d="M2 4h6M5 1.500v5M6 8h6M9 5.500v5" stroke="#1e1e1e" stroke-width="1.800" fill="none"/></svg>
<div class="t ui tr" style="left:89px;top:397px;;letter-spacing:-0.15px">DatasmithNavisworks2019</div>
<svg style="left:47px;top:418px" width="6" height="10" viewBox="0 0 6 10"><path d="M0.5 0.8v8.4L5.3 5z" fill="none" stroke="#1e1e1e" stroke-width="1"/></svg>
<svg style="left:69px;top:418px" width="14" height="12" viewBox="0 0 14 12"><rect x="0.500" y="0.500" width="13" height="11" fill="#eef0fa" stroke="#9b4f96" stroke-width="1"/><path d="M2 4h6M5 1.500v5M6 8h6M9 5.500v5" stroke="#1e1e1e" stroke-width="1.800" fill="none"/></svg>
<div class="t ui tr" style="left:89px;top:415px;;letter-spacing:-0.15px">DatasmithNavisworks2020</div>
<svg style="left:47px;top:436px" width="6" height="10" viewBox="0 0 6 10"><path d="M0.5 0.8v8.4L5.3 5z" fill="none" stroke="#1e1e1e" stroke-width="1"/></svg>
<svg style="left:69px;top:436px" width="14" height="12" viewBox="0 0 14 12"><rect x="0.500" y="0.500" width="13" height="11" fill="#eef0fa" stroke="#9b4f96" stroke-width="1"/><path d="M2 4h6M5 1.500v5M6 8h6M9 5.500v5" stroke="#1e1e1e" stroke-width="1.800" fill="none"/></svg>
<div class="t ui tr" style="left:89px;top:433px;;letter-spacing:-0.15px">DatasmithNavisworks2021</div>
<svg style="left:47px;top:454px" width="6" height="10" viewBox="0 0 6 10"><path d="M0.5 0.8v8.4L5.3 5z" fill="none" stroke="#1e1e1e" stroke-width="1"/></svg>
<svg style="left:69px;top:454px" width="14" height="12" viewBox="0 0 14 12"><rect x="0.500" y="0.500" width="13" height="11" fill="#eef0fa" stroke="#9b4f96" stroke-width="1"/><path d="M2 4h6M5 1.500v5M6 8h6M9 5.500v5" stroke="#1e1e1e" stroke-width="1.800" fill="none"/></svg>
<div class="t ui tr" style="left:89px;top:451px;;letter-spacing:-0.21px">DatasmithRevit2018</div>
<svg style="left:47px;top:472px" width="6" height="10" viewBox="0 0 6 10"><path d="M0.5 0.8v8.4L5.3 5z" fill="none" stroke="#1e1e1e" stroke-width="1"/></svg>
<svg style="left:69px;top:472px" width="14" height="12" viewBox="0 0 14 12"><rect x="0.500" y="0.500" width="13" height="11" fill="#eef0fa" stroke="#9b4f96" stroke-width="1"/><path d="M2 4h6M5 1.500v5M6 8h6M9 5.500v5" stroke="#1e1e1e" stroke-width="1.800" fill="none"/></svg>
<div class="t ui tr" style="left:89px;top:469px;;letter-spacing:-0.21px">DatasmithRevit2019</div>
<svg style="left:47px;top:490px" width="6" height="10" viewBox="0 0 6 10"><path d="M0.5 0.8v8.4L5.3 5z" fill="none" stroke="#1e1e1e" stroke-width="1"/></svg>
<svg style="left:69px;top:490px" width="14" height="12" viewBox="0 0 14 12"><rect x="0.500" y="0.500" width="13" height="11" fill="#eef0fa" stroke="#9b4f96" stroke-width="1"/><path d="M2 4h6M5 1.500v5M6 8h6M9 5.500v5" stroke="#1e1e1e" stroke-width="1.800" fill="none"/></svg>
<div class="t ui tr" style="left:89px;top:487px;;letter-spacing:-0.21px">DatasmithRevit2020</div>
<svg style="left:47px;top:508px" width="6" height="10" viewBox="0 0 6 10"><path d="M0.5 0.8v8.4L5.3 5z" fill="none" stroke="#1e1e1e" stroke-width="1"/></svg>
<svg style="left:69px;top:508px" width="14" height="12" viewBox="0 0 14 12"><rect x="0.500" y="0.500" width="13" height="11" fill="#eef0fa" stroke="#9b4f96" stroke-width="1"/><path d="M2 4h6M5 1.500v5M6 8h6M9 5.500v5" stroke="#1e1e1e" stroke-width="1.800" fill="none"/></svg>
<div class="t ui tr" style="left:89px;top:505px;;letter-spacing:-0.21px">DatasmithRevit2021</div>
<svg style="left:47px;top:526px" width="6" height="10" viewBox="0 0 6 10"><path d="M0.5 0.8v8.4L5.3 5z" fill="none" stroke="#1e1e1e" stroke-width="1"/></svg>
<svg style="left:69px;top:526px" width="14" height="12" viewBox="0 0 14 12"><rect x="0.500" y="0.500" width="13" height="11" fill="#eef0fa" stroke="#9b4f96" stroke-width="1"/><path d="M2 4h6M5 1.500v5M6 8h6M9 5.500v5" stroke="#1e1e1e" stroke-width="1.800" fill="none"/></svg>
<div class="t ui tr" style="left:89px;top:523px;;letter-spacing:-0.03px">DatasmithRhino6</div>
<svg style="left:47px;top:544px" width="6" height="10" viewBox="0 0 6 10"><path d="M0.5 0.8v8.4L5.3 5z" fill="none" stroke="#1e1e1e" stroke-width="1"/></svg>
<svg style="left:69px;top:544px" width="14" height="12" viewBox="0 0 14 12"><rect x="0.500" y="0.500" width="13" height="11" fill="#eef0fa" stroke="#9b4f96" stroke-width="1"/><path d="M2 4h6M5 1.500v5M6 8h6M9 5.500v5" stroke="#1e1e1e" stroke-width="1.800" fill="none"/></svg>
<div class="t ui tr" style="left:89px;top:541px;;letter-spacing:-0.03px">DatasmithRhino7</div>
<svg style="left:47px;top:562px" width="6" height="10" viewBox="0 0 6 10"><path d="M0.5 0.8v8.4L5.3 5z" fill="none" stroke="#1e1e1e" stroke-width="1"/></svg>
<svg style="left:69px;top:562px" width="14" height="12" viewBox="0 0 14 12"><rect x="0.500" y="0.500" width="13" height="11" fill="#eef0fa" stroke="#9b4f96" stroke-width="1"/><path d="M2 4h6M5 1.500v5M6 8h6M9 5.500v5" stroke="#1e1e1e" stroke-width="1.800" fill="none"/></svg>
<div class="t ui tr" style="left:89px;top:559px;;letter-spacing:-0.28px">DatasmithSDK</div>
<svg style="left:47px;top:580px" width="6" height="10" viewBox="0 0 6 10"><path d="M0.5 0.8v8.4L5.3 5z" fill="none" stroke="#1e1e1e" stroke-width="1"/></svg>
<svg style="left:69px;top:580px" width="14" height="12" viewBox="0 0 14 12"><rect x="0.500" y="0.500" width="13" height="11" fill="#eef0fa" stroke="#9b4f96" stroke-width="1"/><path d="M2 4h6M5 1.500v5M6 8h6M9 5.500v5" stroke="#1e1e1e" stroke-width="1.800" fill="none"/></svg>
<div class="t ui tr" style="left:89px;top:577px;;letter-spacing:-0.19px">DatasmithSketchUp2017</div>
<svg style="left:47px;top:598px" width="6" height="10" viewBox="0 0 6 10"><path d="M0.5 0.8v8.4L5.3 5z" fill="none" stroke="#1e1e1e" stroke-width="1"/></svg>
<svg style="left:69px;top:598px" width="14" height="12" viewBox="0 0 14 12"><rect x="0.500" y="0.500" width="13" height="11" fill="#eef0fa" stroke="#9b4f96" stroke-width="1"/><path d="M2 4h6M5 1.500v5M6 8h6M9 5.500v5" stroke="#1e1e1e" stroke-width="1.800" fill="none"/></svg>
<div class="t ui tr" style="left:89px;top:595px;;letter-spacing:-0.19px">DatasmithSketchUp2018</div>
<svg style="left:47px;top:616px" width="6" height="10" viewBox="0 0 6 10"><path d="M0.5 0.8v8.4L5.3 5z" fill="none" stroke="#1e1e1e" stroke-width="1"/></svg>
<svg style="left:69px;top:616px" width="14" height="12" viewBox="0 0 14 12"><rect x="0.500" y="0.500" width="13" height="11" fill="#eef0fa" stroke="#9b4f96" stroke-width="1"/><path d="M2 4h6M5 1.500v5M6 8h6M9 5.500v5" stroke="#1e1e1e" stroke-width="1.800" fill="none"/></svg>
<div class="t ui tr" style="left:89px;top:613px;;letter-spacing:-0.19px">DatasmithSketchUp2019</div>
<svg style="left:47px;top:634px" width="6" height="10" viewBox="0 0 6 10"><path d="M0.5 0.8v8.4L5.3 5z" fill="none" stroke="#1e1e1e" stroke-width="1"/></svg>
<svg style="left:69px;top:634px" width="14" height="12" viewBox="0 0 14 12"><rect x="0.500" y="0.500" width="13" height="11" fill="#eef0fa" stroke="#9b4f96" stroke-width="1"/><path d="M2 4h6M5 1.500v5M6 8h6M9 5.500v5" stroke="#1e1e1e" stroke-width="1.800" fill="none"/></svg>
<div class="t ui tr" style="left:89px;top:631px;;letter-spacing:-0.19px">DatasmithSketchUp2020</div>
</div>
<div class="lav" style="left:303px;top:71px;width:151px;height:22px;"></div>
<div class="t ui tb" style="left:307px;top:74px;color:#1b2460;letter-spacing:-0.05px">UnrealClient.cpp</div>
<svg style="left:402px;top:78px" width="7" height="9" viewBox="0 0 7 9"><rect x="0" y="4" width="7" height="5" fill="#2a2a2a"/><path d="M1.5 4V2.3a2 2 0 0 1 4 0V4" fill="none" stroke="#2a2a2a" stroke-width="1.2"/></svg>
<svg style="left:421px;top:79px" width="10" height="8" viewBox="0 0 10 8"><path d="M0 4h3.5M3.5 1v6M3.5 2h5v4h-5M8.5 0.5v7" fill="none" stroke="#5d6b99" stroke-width="1"/></svg>
<svg style="left:440px;top:78px" width="9" height="9" viewBox="0 0 9 9"><path d="M0.5 0.5L8.5 8.5M8.5 0.5L0.5 8.5" stroke="#5d6b99" stroke-width="1.2" fill="none"/></svg>
<div class="ttl" style="left:455px;top:72px;width:182px;height:18px;"></div>
<div class="t ui tb w" style="left:459px;top:73px;;letter-spacing:0.01px">MonitoredProcess.cpp</div>
<svg style="left:586px;top:77px" width="7" height="9" viewBox="0 0 7 9"><rect x="0" y="4" width="7" height="5" fill="#e8ebf7"/><path d="M1.5 4V2.3a2 2 0 0 1 4 0V4" fill="none" stroke="#e8ebf7" stroke-width="1.2"/></svg>
<div class="ttl" style="left:639px;top:72px;width:124px;height:18px;"></div>
<div class="t ui tb w" style="left:643px;top:73px;;letter-spacing:-0.09px">EditorEngine.h</div>
<div class="ttl" style="left:765px;top:72px;width:184px;height:18px;"></div>
<div class="t ui tb w" style="left:769px;top:73px;;letter-spacing:-0.15px">PlayLevelViaLauncher.cpp</div>
<div class="lav" style="left:303px;top:90px;width:798px;height:3px;"></div>
<svg style="left:1073px;top:77px" width="9" height="8" viewBox="0 0 9 8"><rect x="0" y="0" width="9" height="1.800" fill="#dfe3f3"/><path d="M0 3.500h9l-4.500 4.500z" fill="#dfe3f3"/></svg>
<svg style="left:1090px;top:75px" width="11" height="11" viewBox="0 0 11 11"><g transform="translate(5.5,5.5)"><rect x="-1.100" y="-5.500" width="2.200" height="11" fill="#dfe3f3" transform="rotate(0)"/><rect x="-1.100" y="-5.500" width="2.200" height="11" fill="#dfe3f3" transform="rotate(45)"/><rect x="-1.100" y="-5.500" width="2.200" height="11" fill="#dfe3f3" transform="rotate(90)"/><rect x="-1.100" y="-5.500" width="2.200" height="11" fill="#dfe3f3" transform="rotate(135)"/><circle r="3.900" fill="#dfe3f3"/><circle r="1.700" fill="#5d6b99"/></g></svg>
<div class="lav" style="left:303px;top:92px;width:798px;height:24px;"></div>
<div style="left:303px;top:92px;width:761px;height:24px;background:#6c7bb6"></div>
<div style="left:303px;top:114px;width:761px;height:1px;background:#8f9bc9"></div>
<div style="left:304px;top:93px;width:393px;height:21px;background:#f3f6ff;border-top:1px solid #b1badf"></div>
<div style="left:697px;top:92px;width:5px;height:24px;background:#5d6b99"></div>
<div style="left:702px;top:93px;width:361px;height:21px;background:#f3f6ff;border-top:1px solid #b1badf"></div>
<div style="left:679px;top:95px;width:1px;height:18px;background:#dbe3fa"></div>
<div style="left:682px;top:105px;width:14px;height:1px;background:#dbe3fa"></div>
<svg style="left:308px;top:98px" width="14" height="11" viewBox="0 0 14 11"><path d="M3.500 2.500V0.600h9.800v6.800h-4.300" fill="#e9ecfa" stroke="#2a2a2a" stroke-width="1.100"/><rect x="0" y="4" width="3.200" height="7" fill="#00539c"/><rect x="4.200" y="4" width="3.200" height="7" fill="#00539c"/><path d="M1 5.800h1.200M1 8.300h1.200M5.200 5.800h1.200M5.200 8.300h1.200" stroke="#fff" stroke-width="1"/></svg>
<div class="t ui nv" style="left:327px;top:96px;;letter-spacing:-0.38px"><span class="ty">FCanvas</span><span class="f">.SetRenderTargetRect</span></div>
<svg style="left:669px;top:103px" width="7" height="4" viewBox="0 0 7 4"><path d="M0.500 0h6l-3 3.200z" fill="#1e1e1e"/></svg>
<svg style="left:686px;top:97px" width="6" height="3" viewBox="0 0 6 3"><path d="M0 3h6l-3.0 -3z" fill="#1e1e1e"/></svg>
<svg style="left:686px;top:108px" width="6" height="3" viewBox="0 0 6 3"><path d="M0 0h6l-3.0 3z" fill="#1e1e1e"/></svg>
<svg style="left:705px;top:99px" width="10" height="11" viewBox="0 0 10 11"><path d="M5 0.600l4.300 2.400v5L5 10.400 0.700 8V3z" fill="none" stroke="#6a2aa0" stroke-width="1.100"/><path d="M0.700 3L5 5.400 9.300 3M5 5.400v5" fill="none" stroke="#6a2aa0" stroke-width="0.900"/></svg>
<div class="t ui nv" style="left:725px;top:96px;;letter-spacing:-0.27px"><span class="m">ENGINE_API</span> <span class="k">void</span> <span class="f">SetRenderTargetRect(</span><span class="k">const</span> <span class="ty">FIntRect</span><span class="v">&amp; View</span></div>
<svg style="left:1052px;top:103px" width="7" height="4" viewBox="0 0 7 4"><path d="M0.500 0h6l-3 3.200z" fill="#1e1e1e"/></svg>
<svg style="left:1066px;top:95px" width="15" height="18" viewBox="0 0 15 18"><path d="M8.500 3.200C3 3.500 0.300 7.500 1.200 12l3.500 5.500C4 12 5.500 8.500 9 8z" fill="#3cae3c"/><path d="M8.500 3.200C4.500 3.400 2 6 1.500 9.500 3 6.500 5.500 5.200 8.700 5.200z" fill="#78e068"/><path d="M8 0.200l6 4.400-5.500 4.900z" fill="#2a9a2a"/></svg>
<div class="t ui" style="left:1080px;top:96px;font-size:14.5px;letter-spacing:-0.42px">Go</div>
<div style="left:303px;top:116px;width:698px;height:659px;background:#fff"></div>
<div style="left:303px;top:116px;width:17px;height:659px;background:#e6e7e8"></div>
<div style="left:392px;top:385px;width:609px;height:16px;border:2px solid #e9eaf3;border-right:none"></div>
<div style="left:800px;top:386px;width:113px;height:15px;background:#fdee8e"></div>
<div style="left:320px;top:116px;width:681px;height:659px;overflow:hidden">
<div style="left:77px;top:-2px;width:0;height:672px;border-left:1px dashed #c9c9c9"></div>
<div style="left:105px;top:-2px;width:0;height:672px;border-left:1px dashed #c9c9c9"></div>
<div style="left:133px;top:-2px;width:0;height:672px;border-left:1px dashed #c9c9c9"></div>
<div style="left:161px;top:-2px;width:0;height:560px;border-left:1px dashed #c9c9c9"></div>
<div style="left:189px;top:-2px;width:0;height:208px;border-left:1px dashed #c9c9c9"></div>
<div style="left:217px;top:-2px;width:0;height:192px;border-left:1px dashed #c9c9c9"></div>
<div style="left:245px;top:-2px;width:0;height:48px;border-left:1px dashed #c9c9c9"></div>
<div style="left:245px;top:94px;width:0;height:16px;border-left:1px dashed #c9c9c9"></div>
<div style="left:189px;top:302px;width:0;height:48px;border-left:1px dashed #c9c9c9"></div>
<div style="left:161px;top:654px;width:0;height:16px;border-left:1px dashed #c9c9c9"></div>
<div class="mono ln" style="left:7px;top:-2px">1548</div>
<div class="mono cd" style="left:270px;top:-2px"><span class="ty">uint32</span> <span class="v">ThreadTime</span>   = <span class="v">CurrentTime</span> - <span class="v">Lastimestamp</span>;</div>
<div class="mono ln" style="left:7px;top:14px">1549</div>
<div class="mono cd" style="left:270px;top:14px"><span class="c">// add any stalls via sleep or fevent</span></div>
<div class="mono ln" style="left:7px;top:30px">1550</div>
<div class="mono cd" style="left:270px;top:30px"><span class="v">GGameThreadTime</span>     = (<span class="v">ThreadTime</span> &gt; <span class="v">GameThread</span>.<span class="v">Waits</span>) ? (<span class="v">ThreadTime</span> - <span class="v">GameThread</span>.<span class="v">Waits</span>) : <span class="v">ThreadTime</span>;</div>
<div class="mono ln" style="left:7px;top:46px">1551</div>
<div class="mono cd" style="left:242px;top:46px">}</div>
<div class="mono ln" style="left:7px;top:62px">1552</div>
<div class="mono cd" style="left:242px;top:62px"><span class="p">else</span></div>
<div class="mono ln" style="left:7px;top:78px">1553</div>
<div class="mono cd" style="left:242px;top:78px">{</div>
<div class="mono ln" style="left:7px;top:94px">1554</div>
<div class="mono cd" style="left:270px;top:94px"><span class="v">bStarted</span> = <span class="k">true</span>;</div>
<div class="mono ln" style="left:7px;top:110px">1555</div>
<div class="mono cd" style="left:242px;top:110px">}</div>
<div class="mono ln" style="left:7px;top:126px">1556</div>
<div class="mono ln" style="left:7px;top:142px">1557</div>
<div class="mono cd" style="left:242px;top:142px"><span class="v">LastFrameUpdated</span> = <span class="v">GFrameCounter</span>;</div>
<div class="mono ln" style="left:7px;top:158px">1558</div>
<div class="mono cd" style="left:242px;top:158px"><span class="v">Lastimestamp</span>        = <span class="v">CurrentTime</span>;</div>
<div class="mono ln" style="left:7px;top:174px">1559</div>
<div class="mono cd" style="left:242px;top:174px"><span class="v">GameThread</span>.<span class="v">Waits</span> = 0;</div>
<div class="mono ln" style="left:7px;top:190px">1560</div>
<div class="mono cd" style="left:214px;top:190px">}</div>
<div class="mono ln" style="left:7px;top:206px">1561</div>
<div class="mono cd" style="left:186px;top:206px">}</div>
<div class="mono ln" style="left:7px;top:222px">1562</div>
<div class="mono ln" style="left:7px;top:238px">1563</div>
<div class="mono cd" style="left:186px;top:238px"><span class="ty">UWorld</span>* <span class="v">ViewportWorld</span> = <span class="ty">ViewportClient</span>-&gt;<span class="f">GetWorld</span>();</div>
<div class="mono ln" style="left:7px;top:254px">1564</div>
<div class="mono cd" style="left:186px;top:254px"><span class="ty">FCanvas</span> <span class="v">Canvas</span>(<span class="k">this</span>, <span class="k">nullptr</span>, <span class="v">ViewportWorld</span>, <span class="v">ViewportWorld</span> ? <span class="v">ViewportWorld</span>-&gt;<span class="v">FeatureLevel</span>.<span class="f">GetValue</span>() : <span class="v">GMaxRHIFeatureLevel</span>);</div>
<div class="mono ln" style="left:7px;top:270px">1565</div>
<div class="mono cd" style="left:186px;top:270px"><span class="v">Canvas</span>.<span class="f">SetRenderTargetRect</span>(<span class="ty">FIntRect</span>(0, 0, <span class="v">SizeX</span>, <span class="v">SizeY</span>));</div>
<div class="mono ln" style="left:7px;top:286px">1566</div>
<div class="mono cd" style="left:186px;top:286px">{</div>
<div class="mono ln" style="left:7px;top:302px">1567</div>
<div class="mono cd" style="left:214px;top:302px"><span class="c">// Make sure the Canvas is not rendered upside down</span></div>
<div class="mono ln" style="left:7px;top:318px">1568</div>
<div class="mono cd" style="left:214px;top:318px"><span class="v">Canvas</span>.<span class="f">SetAllowSwitchVerticalAxis</span>(<span class="k">true</span>);</div>
<div class="mono ln" style="left:7px;top:334px">1569</div>
<div class="mono cd" style="left:214px;top:334px"><span class="ty">ViewportClient</span>-&gt;<span class="f">Draw</span>(<span class="k">this</span>, &amp;<span class="v">Canvas</span>);</div>
<div class="mono ln" style="left:7px;top:350px">1570</div>
<div class="mono cd" style="left:186px;top:350px">}</div>
<div class="mono ln" style="left:7px;top:366px">1571</div>
<div class="mono cd" style="left:186px;top:366px"><span class="v">Canvas</span>.<span class="f">Flush_GameThread</span>();</div>
<div class="mono ln" style="left:7px;top:382px">1572</div>
<div class="mono ln" style="left:7px;top:398px">1573</div>
<div class="mono cd" style="left:186px;top:398px"><span class="ty">UGameViewportClient</span>::<span class="f">OnViewportRendered</span>().<span class="f">Broadcast</span>(<span class="k">this</span>);</div>
<div class="mono ln" style="left:7px;top:414px">1574</div>
<div class="mono ln" style="left:7px;top:430px">1575</div>
<div class="mono cd" style="left:186px;top:430px"><span class="ty">ViewportClient</span>-&gt;<span class="f">ProcessScreenShots</span>(<span class="k">this</span>);</div>
<div class="mono ln" style="left:7px;top:446px">1576</div>
<div class="mono ln" style="left:7px;top:462px">1577</div>
<div class="mono cd" style="left:186px;top:462px"><span class="c">// Slate doesn't present immediately. Tag the viewport as requiring vsync so that it happens.</span></div>
<div class="mono ln" style="left:7px;top:478px">1578</div>
<div class="mono cd" style="left:186px;top:478px"><span class="f">SetRequiresVsync</span>(<span class="v">bLockToVsync</span>);</div>
<div class="mono ln" style="left:7px;top:494px">1579</div>
<div class="mono cd" style="left:186px;top:494px"><span class="f">EnqueueEndRenderFrame</span>(<span class="v">bLockToVsync</span>, <span class="v">bShouldPresent</span>);</div>
<div class="mono ln" style="left:7px;top:510px">1580</div>
<div class="mono ln" style="left:7px;top:526px">1581</div>
<div class="mono cd" style="left:186px;top:526px"><span class="v">GInputLatencyTimer</span>.<span class="v">GameThreadTrigger</span> = <span class="k">false</span>;</div>
<div class="mono ln" style="left:7px;top:542px">1582</div>
<div class="mono cd" style="left:158px;top:542px">}</div>
<div class="mono ln" style="left:7px;top:558px">1583</div>
<div class="mono cd" style="left:130px;top:558px">}</div>
<div class="mono ln" style="left:7px;top:574px">1584</div>
<div class="mono ln" style="left:7px;top:590px">1585</div>
<div class="mono cd" style="left:130px;top:590px"><span class="c">// Reset the camera cut flags if we are in a viewport that has a world</span></div>
<div class="mono ln" style="left:7px;top:606px">1586</div>
<div class="mono cd" style="left:130px;top:606px"><span class="p">if</span> (<span class="v">World</span>)</div>
<div class="mono ln" style="left:7px;top:622px">1587</div>
<div class="mono cd" style="left:130px;top:622px">{</div>
<div class="mono ln" style="left:7px;top:638px">1588</div>
<div class="mono cd" style="left:158px;top:638px"><span class="p">for</span>( <span class="ty">FConstPlayerControllerIterator</span> <span class="v">Iterator</span> = <span class="v">World</span>-&gt;<span class="f">GetPlayerControllerIterator</span>(); <span class="v">Iterator</span>; ++<span class="v">Iterator</span> )</div>
<div class="mono ln" style="left:7px;top:654px">1589</div>
<div class="mono cd" style="left:158px;top:654px">{</div>
</div>
<svg style="left:305.5px;top:386.5px" width="12" height="12" viewBox="0 0 12 12"><circle cx="6" cy="6" r="5.600" fill="#e51400"/><path d="M1.600 4.300h3.900V2L11.200 6 5.500 10V7.700H1.600z" fill="#ffd31a" stroke="#4a4020" stroke-width="0.700" stroke-linejoin="round"/></svg>
<div class="sb" style="left:1001px;top:116px;width:100px;height:659px;"></div>
<div style="left:1001px;top:116px;width:100px;height:22px;background:#e9edfb;border-bottom:1px solid #8a98d0;border-left:1px solid #a9b4dd"></div>
<svg style="left:1045px;top:120px" width="11" height="13" viewBox="0 0 11 13"><path d="M0 6.500h11M5.500 0v4.500M3.500 2l2-2 2 2M5.500 13V8.500M3.500 11l2 2 2-2" fill="none" stroke="#1e1e1e" stroke-width="1.100"/></svg>
<svg style="left:1047px;top:143px" width="9" height="5" viewBox="0 0 9 5"><path d="M0 5h9l-4.5 -5z" fill="#a3a5ad"/></svg>
<svg style="left:1047px;top:765px" width="9" height="5" viewBox="0 0 9 5"><path d="M0 0h9l-4.5 5z" fill="#a3a5ad"/></svg>
<svg style="left:0;top:0" width="1920" height="1048"><path d="M1025 154.7h5M1031 154.7h3M1036 154.7h7M1044 154.7h2M1047 154.7h2M1049.5 154.7h6M1057.5 154.7h7M1039.5 160.7h6M1046.5 160.7h6M1043 162.7h2M1056 162.7h2M1059 162.7h7M1030 166.7h5M1035.5 166.7h6M1042 166.7h4M1071.5 169.7h7M1079.5 169.7h2M1082.5 169.7h3M1047 177.7h4M1052 177.7h4M1063.5 198.7h3M1022 203.7h6M1075 203.7h5M1022.5 214.7h7M1030 214.7h7M1039 214.7h7M1047 214.7h4M1053 214.7h2M1058 228.7h2M1078 230.7h3M1081.5 230.7h3M1028.5 237.7h4M1041.5 237.7h2M1055 257.7h2M1075.5 269.7h2M1026 277.7h3M1030 277.7h4M1035 277.7h7M1044 277.7h3M1048 277.7h4M1053 277.7h2M1055.5 277.7h7M1048.5 281.7h2M1088 288.7h4M1093 288.7h4M1098 288.7h3M1044.5 291.7h2M1048.5 291.7h3M1052 291.7h6M1058.5 291.7h3M1061.5 300.7h5M1067.5 300.7h4M1072 300.7h5M1057.5 302.7h2M1060.5 302.7h5M1066 302.7h3M1071 302.7h3M1072 311.7h4M1078 311.7h4M1068 320.7h4M1046 331.7h3M1049.5 331.7h6M1056 331.7h3M1040 343.7h2M1044 343.7h2M1046.5 343.7h4M1022 386.7h6M1050.5 386.7h7M1058 386.7h5M1064 386.7h6M1027 418.7h6M1033.5 418.7h5M1039.5 418.7h5M1046.5 418.7h7M1042.5 421.7h7M1042.5 423.7h7M1051.5 423.7h4M1057.5 423.7h7M1065.5 423.7h2M1045 430.7h6M1052 430.7h2M1055 430.7h7M1063 430.7h4M1068 430.7h4M1072.5 430.7h3M1022 447.7h3M1025.5 447.7h4M1030.5 447.7h5M1057 447.7h2M1059.5 447.7h7M1067.5 447.7h2M1070.5 447.7h2M1047 452.7h6M1053.5 452.7h7M1031.5 467.7h6M1089.5 467.7h3M1063.5 480.7h2M1066 480.7h4M1036 506.7h5M1041.5 506.7h5M1048.5 506.7h3M1048 535.7h6M1030 538.7h7M1037.5 538.7h6M1044.5 538.7h4M1031 541.7h2M1035 541.7h7M1042.5 541.7h4M1058 544.7h5M1063.5 544.7h7M1071.5 544.7h6M1078.5 544.7h2M1082.5 544.7h2M1085 544.7h6M1037 547.7h5M1089.5 550.7h4M1094 550.7h4M1098.5 550.7h2.5M1064 572.7h2M1066.5 572.7h7M1074.5 572.7h3M1089 572.7h5M1025 574.7h4M1053 574.7h7M1060.5 574.7h7M1025 576.7h4M1030 576.7h6M1037 576.7h7M1046 576.7h4M1052 576.7h2M1053 581.7h7M1061 581.7h2M1064 581.7h1M1018 602.7h2M1064 605.7h2M1067 605.7h6M1063 608.7h7M1070.5 608.7h6M1077.5 608.7h7M1085 608.7h2M1087.5 608.7h2M1090 608.7h4M1094.5 608.7h1M1078.5 623.7h3M1075.5 625.7h6M1056.5 633.7h2M1027 636.7h6M1070 643.7h7M1078 643.7h5M1085 666.7h6M1036 669.7h6M1044 669.7h3M1027 678.7h5M1089.5 680.7h4M1095.5 680.7h5M1078 707.7h7M1018 710.7h6M1073 710.7h4M1092 710.7h3M1096 710.7h5M1058 716.7h5M1029.5 720.7h4M1068.5 720.7h3M1073.5 720.7h4M1041 723.7h4M1056 723.7h4M1043 726.7h2M1046 726.7h6M1054 726.7h5M1061 726.7h2M1064 726.7h7M1037 734.7h3M1040.5 734.7h5M1046.5 734.7h7M1054 734.7h2M1018 750.7h3M1022 750.7h2M1024.5 750.7h4M1029.5 750.7h7M1038.5 750.7h6M1045.5 750.7h7M1072 750.7h5M1085.5 750.7h3M1089.5 750.7h2" stroke="#2b91af" stroke-width="1.4" opacity="0.5" fill="none"/><path d="M1065.5 154.7h6M1063.5 160.7h7M1071.5 160.7h7M1022 172.7h6M1029 172.7h5M1035 172.7h2M1039 172.7h3M1043 172.7h7M1050.5 172.7h5M1033 180.7h6M1040 180.7h6M1047 180.7h3M1022 206.7h5M1029 206.7h5M1035 206.7h7M1042.5 206.7h5M1045.5 212.7h5M1052.5 212.7h3M1020 230.7h6M1027 230.7h3M1059.5 237.7h5M1065.5 237.7h1M1048 240.7h4M1052.5 240.7h6M1059.5 240.7h3M1063.5 240.7h3M1067 240.7h5M1022 251.7h6M1029 251.7h6M1036 251.7h2M1039 251.7h7M1047 251.7h7M1055 251.7h4M1060 251.7h6M1030 257.7h4M1036 257.7h2M1075.5 257.7h2M1096 257.7h4M1067 265.7h2M1050 279.7h3M1057.5 284.7h4M1062.5 284.7h2M1076.5 284.7h1M1087.5 286.7h2M1090.5 286.7h2M1093.5 286.7h2M1096 286.7h4M1048 308.7h2M1050.5 308.7h2M1053 308.7h2M1056 308.7h7M1086 308.7h6M1093 308.7h5M1098.5 308.7h2.5M1018 318.7h2M1020 331.7h6M1027 331.7h2M1030 331.7h6M1084.5 331.7h3M1060.5 343.7h4M1076.5 343.7h4M1081.5 343.7h3M1086.5 343.7h4M1063 352.7h2M1067 352.7h2M1069.5 352.7h5M1053 365.7h6M1059.5 365.7h4M1064.5 365.7h6M1071.5 365.7h3M1076.5 365.7h6M1071 386.7h2M1074 386.7h6M1081 386.7h1M1031 423.7h6M1038 423.7h4M1041.5 428.7h6M1048.5 428.7h3M1052.5 428.7h3M1060.5 428.7h5M1084 428.7h3M1037.5 430.7h7M1083.5 430.7h2M1086 430.7h3M1091 430.7h4M1053.5 432.7h7M1062.5 432.7h6M1070.5 432.7h2M1073 432.7h3M1077 432.7h2M1081 432.7h3M1085 432.7h7M1093 432.7h2M1097 432.7h2M1022 444.7h6M1028.5 444.7h3M1032.5 444.7h3M1036.5 444.7h2M1040.5 444.7h2M1022 452.7h7M1029.5 452.7h6M1036 452.7h6M1044 452.7h2M1018 463.7h2M1022 463.7h2M1026 463.7h5M1057 465.7h3M1061 465.7h5M1067 465.7h4M1072 465.7h4M1043.5 472.7h3M1048.5 472.7h2M1052.5 472.7h2M1071 482.7h4M1075.5 482.7h7M1083.5 482.7h6M1090 482.7h4M1094.5 482.7h5M1022 487.7h6M1028.5 487.7h4M1033 487.7h4M1037.5 487.7h6M1089.5 487.7h5M1095.5 487.7h5.5M1025 512.7h3M1018 515.7h3M1081.5 515.7h7M1025.5 527.7h4M1030.5 527.7h6M1038.5 527.7h3M1042.5 527.7h7M1070 527.7h6M1076.5 527.7h6M1025 532.7h7M1033 532.7h4M1038 532.7h5M1045 532.7h3M1049 532.7h2M1053 532.7h7M1034 547.7h2M1046.5 570.7h4M1051.5 570.7h5M1057.5 570.7h5M1063 570.7h5M1069.5 574.7h6M1076.5 574.7h3M1080.5 574.7h3M1067 595.7h6M1038 598.7h6M1045 598.7h7M1054 598.7h4M1058.5 598.7h4M1063.5 598.7h4M1068.5 598.7h3M1072.5 598.7h5M1042.5 605.7h3M1047.5 605.7h6M1054 605.7h5M1060 605.7h3M1037.5 608.7h7M1046.5 608.7h4M1051 608.7h5M1036.5 623.7h7M1045.5 623.7h2M1071.5 623.7h6M1039.5 625.7h4M1045.5 625.7h5M1038 628.7h5M1044 628.7h7M1052 628.7h4M1056.5 628.7h6M1067.5 628.7h6M1074.5 628.7h6M1081.5 628.7h3M1086.5 628.7h4M1091.5 628.7h1M1046 630.7h7M1018 633.7h3M1034 636.7h4M1029 639.7h2M1031.5 639.7h6M1064 641.7h3M1067.5 641.7h4M1072.5 641.7h6M1025 643.7h4M1029.5 643.7h7M1038.5 643.7h6M1045.5 643.7h5M1067 643.7h2M1079 666.7h4M1020 673.7h6M1026.5 673.7h7M1032.5 678.7h3M1036 678.7h7M1045 678.7h4M1050 678.7h6M1067 687.7h2M1070 687.7h4M1054.5 700.7h2M1057.5 700.7h5M1032.5 703.7h6M1039 703.7h6M1046 703.7h5M1051.5 703.7h3M1078 710.7h5M1084 710.7h7M1047.5 716.7h4M1053.5 720.7h2M1056.5 720.7h6M1064.5 720.7h3M1078.5 720.7h7M1062 723.7h6M1025 734.7h6M1049.5 739.7h6M1078 750.7h7M1025 752.7h7M1033 752.7h7M1041 752.7h4M1045.5 752.7h3M1049.5 752.7h1" stroke="#444" stroke-width="1.4" opacity="0.5" fill="none"/><path d="M1072 154.7h2M1074.5 154.7h5M1046.5 156.7h5M1087 160.7h2M1090 160.7h7M1038.5 162.7h4M1046 162.7h2M1049 162.7h6M1082 162.7h5M1088 162.7h1M1065 166.7h4M1070 166.7h4M1076 166.7h5M1082 166.7h5M1088 166.7h7M1022 169.7h7M1030 169.7h2M1033 169.7h3M1038 169.7h7M1046 169.7h7M1060 169.7h6M1067 169.7h4M1056.5 172.7h5M1062 172.7h7M1058 177.7h6M1066 177.7h6M1073 177.7h7M1080.5 177.7h2M1059 180.7h2M1091 182.7h5M1055.5 185.7h2M1018 190.7h2M1021 190.7h6M1029 190.7h6M1035.5 190.7h7M1043 190.7h6M1049.5 190.7h5M1055.5 190.7h5M1061.5 190.7h5M1067 190.7h5M1074 190.7h4M1079 190.7h4M1085 190.7h7M1093 190.7h2M1086 192.7h5M1027 194.7h7M1035 194.7h3M1051 194.7h2M1053.5 194.7h2M1072 214.7h4M1078 214.7h7M1026 237.7h2M1022 240.7h5M1028 240.7h4M1034 240.7h5M1040 240.7h2M1043 240.7h4M1078.5 257.7h2M1082.5 257.7h5M1088 257.7h7M1048 259.7h5M1055 259.7h4M1061 259.7h7M1070 259.7h3M1061 265.7h4M1027 267.7h6M1047 267.7h6M1053.5 267.7h3M1025 269.7h5M1031 269.7h3M1035 269.7h5M1041 269.7h7M1082.5 277.7h3M1086.5 277.7h5M1020 279.7h3M1023.5 279.7h5M1029.5 279.7h4M1035.5 279.7h4M1041.5 279.7h5M1060.5 279.7h3M1020 281.7h6M1027 281.7h7M1035 281.7h3M1046 281.7h2M1036 284.7h4M1041 284.7h5M1046.5 284.7h3M1068.5 284.7h6M1064 286.7h6M1075.5 291.7h5M1081.5 291.7h7M1037 300.7h4M1041.5 300.7h7M1022 308.7h6M1038.5 308.7h2M1042.5 308.7h2M1064 308.7h4M1069 308.7h6M1075.5 308.7h3M1022.5 311.7h5M1028 311.7h5M1083 311.7h5M1088.5 311.7h3M1092.5 311.7h3M1051 318.7h7M1062.5 318.7h2M1072.5 322.7h2M1075.5 322.7h4M1080.5 322.7h2M1083.5 322.7h6M1060 331.7h4M1065 331.7h6M1072 331.7h5M1077.5 331.7h6M1088.5 331.7h2M1091.5 331.7h1M1025 334.7h2M1029 334.7h3M1058 334.7h3M1087 334.7h4M1092 334.7h7M1099.5 334.7h1.5M1020 339.7h7M1091.5 343.7h7M1055 349.7h2M1059 349.7h4M1064 349.7h7M1071.5 349.7h5M1078.5 349.7h2M1082.5 349.7h7M1090.5 349.7h5M1096 349.7h2M1025 360.7h5M1031 360.7h7M1051 360.7h6M1059 360.7h6M1065.5 360.7h4M1071.5 360.7h7M1079.5 360.7h2M1094.5 360.7h6M1036 362.7h7M1044 362.7h3M1049 362.7h5M1055 362.7h6M1062 362.7h6M1077.5 362.7h5M1084.5 362.7h2M1087 362.7h1M1032.5 374.7h3M1036.5 374.7h4M1081 374.7h7M1056 379.7h5M1063 379.7h7M1070.5 379.7h7M1029 386.7h4M1035 386.7h2M1037.5 386.7h6M1044.5 386.7h4M1027 392.7h2M1029.5 392.7h3M1033.5 392.7h3M1037 392.7h7M1068.5 392.7h7M1044 409.7h7M1022 423.7h2M1025 423.7h5M1079 428.7h4M1096 428.7h4M1018 441.7h4M1023 441.7h5M1028.5 441.7h5M1035.5 441.7h6M1042.5 441.7h6M1049.5 441.7h2M1052.5 441.7h2M1056.5 441.7h7M1064.5 441.7h2M1047 444.7h2M1051 444.7h5M1025 455.7h5M1032 455.7h6M1039 455.7h4M1044 455.7h2M1046.5 455.7h7M1054 455.7h2M1057 455.7h6M1065 455.7h3M1069 455.7h2M1025 465.7h6M1031.5 465.7h7M1054 465.7h2M1094.5 467.7h5M1052.5 480.7h7M1060.5 480.7h2M1066 482.7h4M1060.5 485.7h4M1065.5 485.7h5M1043.5 490.7h7M1051 490.7h3M1055 490.7h6M1063 490.7h5M1069 490.7h5M1027 492.7h6M1066.5 492.7h2M1070.5 492.7h7M1028 500.7h4M1032.5 500.7h6M1064 500.7h5M1076.5 503.7h4M1025 518.7h3M1029 518.7h6M1037 518.7h5M1044 518.7h5M1050 518.7h3M1054 518.7h6M1061 518.7h7M1070 518.7h6M1077 518.7h3M1042.5 521.7h4M1048.5 521.7h3M1053.5 521.7h4M1098 532.7h3M1018 535.7h7M1025.5 535.7h7M1033.5 535.7h5M1040.5 535.7h3M1075 535.7h3M1048.5 541.7h5M1054.5 541.7h6M1061.5 541.7h5M1067.5 541.7h2M1071.5 541.7h4M1076 541.7h6M1082.5 541.7h6M1022 544.7h5M1028 544.7h6M1035 544.7h7M1043 544.7h5M1049 544.7h7M1029.5 550.7h2M1032.5 550.7h2M1035.5 550.7h7M1043.5 550.7h7M1080.5 550.7h7M1022 558.7h3M1026 558.7h4M1031 558.7h6M1039 558.7h7M1047 558.7h4M1084.5 558.7h6M1018 561.7h2M1021 561.7h2M1070 570.7h3M1073.5 570.7h2M1077.5 570.7h3M1081 570.7h5M1025 572.7h6M1054.5 576.7h3M1059.5 576.7h3M1063 576.7h2M1066 576.7h3M1071 576.7h4M1076 576.7h3M1079.5 576.7h7M1041 578.7h5M1047 578.7h4M1022 586.7h2M1025 586.7h5M1032 586.7h6M1040 586.7h3M1044 586.7h5M1050 586.7h2M1060.5 586.7h3M1064.5 586.7h3M1031 595.7h6M1029 598.7h5M1035 598.7h2M1093.5 605.7h7M1025 608.7h4M1057 608.7h5M1027 614.7h3M1051 614.7h6M1059 614.7h7M1031.5 616.7h2M1034.5 616.7h3M1048.5 623.7h5M1054.5 623.7h5M1061.5 623.7h5M1067.5 623.7h3M1020 625.7h3M1025 625.7h2M1027.5 625.7h5M1034.5 625.7h4M1051.5 625.7h6M1034 630.7h6M1041 630.7h4M1025 639.7h2M1061 639.7h3M1064.5 639.7h4M1025 641.7h5M1031 641.7h6M1039 641.7h4M1043.5 641.7h6M1050 641.7h5M1056 641.7h3M1059.5 641.7h4M1080.5 641.7h4M1083.5 643.7h7M1091.5 643.7h7M1099.5 643.7h1.5M1018 653.7h2M1022 653.7h2M1026 653.7h6M1030 666.7h6M1038 666.7h3M1041.5 666.7h6M1048.5 666.7h5M1047.5 669.7h2M1060.5 669.7h4M1048 671.7h2M1051 671.7h6M1057.5 671.7h3M1061.5 671.7h4M1067.5 671.7h2M1070.5 671.7h5M1076.5 671.7h4M1081.5 671.7h6M1088 671.7h5M1095 671.7h4M1034 673.7h2M1060 673.7h1M1036.5 680.7h3M1040 680.7h4M1078 687.7h4M1070.5 689.7h3M1074.5 689.7h6M1081.5 689.7h4M1086.5 689.7h4M1037 692.7h7M1044.5 692.7h6M1051.5 692.7h4M1042 700.7h6M1049 700.7h2M1052 700.7h2M1022 703.7h4M1026.5 703.7h2M1029.5 703.7h2M1049 705.7h5M1056 705.7h2M1059 705.7h1M1025.5 707.7h7M1033 707.7h5M1039 707.7h6M1047 707.7h4M1036 710.7h6M1042.5 710.7h6M1094 720.7h2M1098 720.7h2M1039 729.7h6M1047 729.7h6M1054 729.7h7M1057.5 739.7h3M1092 750.7h7M1018 752.7h6M1032 755.7h6M1039 755.7h5M1046 755.7h7M1054 755.7h6M1071.5 755.7h6M1078.5 755.7h3" stroke="#0000ff" stroke-width="1.4" opacity="0.5" fill="none"/><path d="M1080.5 154.7h7M1088 154.7h5M1095 154.7h6M1020 156.7h6M1028 156.7h2M1032 156.7h2M1034.5 156.7h3M1039.5 156.7h5M1018 160.7h2M1027 160.7h5M1033 160.7h6M1053.5 160.7h5M1059.5 160.7h3M1080.5 160.7h6M1027 162.7h7M1035 162.7h3M1067 162.7h6M1075 162.7h4M1079.5 162.7h2M1048 166.7h2M1052 166.7h6M1060 166.7h4M1055 169.7h4M1086 169.7h7M1094 169.7h2M1097 169.7h4M1022 174.7h3M1025.5 174.7h5M1031.5 174.7h6M1039.5 174.7h3M1044.5 174.7h5M1050 174.7h3M1054 174.7h7M1062 174.7h6M1069 174.7h4M1074 174.7h4M1079 174.7h5M1027 177.7h6M1033.5 177.7h5M1039 177.7h6M1022 182.7h3M1045 182.7h3M1049 182.7h3M1053 182.7h7M1061 182.7h7M1025 185.7h4M1046.5 185.7h4M1051 185.7h4M1018 192.7h3M1023 192.7h4M1028 192.7h2M1032 192.7h3M1036 192.7h6M1042.5 192.7h6M1049 192.7h3M1039 194.7h7M1046.5 194.7h4M1067.5 198.7h2M1070.5 198.7h6M1078.5 198.7h2M1081.5 198.7h6M1029 203.7h7M1038 203.7h5M1061.5 203.7h5M1067.5 203.7h7M1080.5 203.7h4M1085.5 203.7h3M1090.5 203.7h6M1098.5 203.7h2.5M1049.5 206.7h2M1053.5 206.7h6M1060.5 206.7h2M1063.5 206.7h2M1066.5 206.7h5M1073.5 206.7h6M1081.5 206.7h3M1085.5 206.7h4M1090.5 206.7h7M1098.5 206.7h2.5M1018 214.7h4M1087 214.7h5M1092.5 214.7h3M1096.5 214.7h3M1028 223.7h7M1025 228.7h6M1032 228.7h6M1039 228.7h4M1044 228.7h6M1051 228.7h6M1062 228.7h7M1070 228.7h4M1031 230.7h6M1038 230.7h7M1046 230.7h6M1053 230.7h6M1059.5 230.7h5M1065.5 230.7h4M1071.5 230.7h6M1025 234.7h5M1031 234.7h6M1039 234.7h2M1042 234.7h7M1018 237.7h6M1044.5 237.7h4M1050.5 237.7h3M1054.5 237.7h4M1067 251.7h2M1071 251.7h3M1076 251.7h5M1082 251.7h2M1039 257.7h5M1046 257.7h7M1058 257.7h7M1066 257.7h5M1072 257.7h3M1020 259.7h2M1023 259.7h6M1030 259.7h5M1036 259.7h5M1042 259.7h5M1030 265.7h4M1035 265.7h7M1043 265.7h3M1046.5 265.7h2M1042 267.7h3M1071.5 269.7h2M1018 277.7h7M1047.5 279.7h2M1053.5 279.7h5M1039 281.7h6M1022 284.7h6M1029 284.7h6M1050.5 284.7h6M1030 286.7h2M1044 286.7h4M1056 286.7h7M1071 286.7h4M1076 286.7h4M1080.5 286.7h5M1082.5 288.7h5M1020 291.7h2M1022.5 291.7h2M1025.5 291.7h2M1028.5 291.7h4M1033.5 291.7h5M1040.5 291.7h3M1065.5 291.7h4M1071.5 291.7h2M1022 300.7h5M1027.5 300.7h4M1033.5 300.7h3M1027 302.7h5M1032.5 302.7h6M1029 308.7h5M1036 308.7h2M1079.5 308.7h6M1018 311.7h4M1033.5 311.7h3M1038.5 311.7h4M1043.5 311.7h7M1051.5 311.7h6M1058 311.7h5M1064 311.7h7M1038 316.7h4M1043 316.7h2M1046 316.7h4M1052 316.7h7M1061 316.7h2M1063.5 316.7h5M1069.5 316.7h4M1074.5 316.7h4M1079 316.7h4M1022 318.7h5M1028 318.7h2M1031 318.7h5M1038 318.7h2M1040.5 318.7h2M1043.5 318.7h7M1022 320.7h6M1029 320.7h6M1036 320.7h3M1041 320.7h6M1049 320.7h5M1056 320.7h4M1061 320.7h5M1037.5 322.7h7M1045 322.7h7M1054 322.7h4M1060 322.7h4M1064.5 322.7h3M1068.5 322.7h3M1020 328.7h6M1070.5 328.7h4M1075 328.7h7M1037 331.7h7M1033 334.7h3M1018 337.7h7M1027 337.7h3M1031 337.7h4M1036 337.7h5M1041.5 337.7h5M1047 337.7h2M1051 337.7h2M1054 337.7h3M1059 337.7h3M1063 337.7h3M1029 339.7h4M1034 339.7h3M1037.5 339.7h3M1041 339.7h2M1043.5 339.7h4M1049.5 339.7h6M1056 339.7h7M1064 339.7h7M1072 339.7h4M1076.5 339.7h4M1082.5 339.7h4M1088.5 339.7h5M1032 341.7h2M1035 341.7h4M1040 341.7h4M1045 341.7h7M1025 343.7h7M1033 343.7h5M1051 343.7h2M1054 343.7h6M1065 343.7h5M1070.5 343.7h5M1030 349.7h6M1038 349.7h7M1047 349.7h7M1027 352.7h6M1035 352.7h4M1039.5 352.7h7M1047.5 352.7h4M1052 352.7h4M1057 352.7h5M1080.5 352.7h5M1086.5 352.7h2M1089.5 352.7h6M1097.5 352.7h3M1040 360.7h2M1043 360.7h2M1046 365.7h6M1025 374.7h4M1029.5 374.7h2M1053 374.7h3M1056.5 374.7h7M1064.5 374.7h4M1069 374.7h7M1077 374.7h3M1045 392.7h3M1049 392.7h3M1053 392.7h5M1059 392.7h4M1064 392.7h4M1046.5 403.7h4M1051 403.7h3M1056 403.7h3M1060 403.7h1M1025 409.7h3M1028.5 409.7h5M1035.5 409.7h4M1052 409.7h4M1031 421.7h7M1038.5 421.7h3M1050.5 421.7h2M1054.5 421.7h3M1058 421.7h3M1062 421.7h2M1068 423.7h7M1031 426.7h7M1040 426.7h3M1043.5 426.7h7M1051.5 426.7h3M1055 426.7h4M1060 426.7h7M1020 428.7h5M1026 428.7h5M1033 428.7h3M1022 430.7h4M1027 430.7h5M1033 430.7h4M1076.5 430.7h5M1020 432.7h3M1024 432.7h6M1030.5 432.7h3M1034.5 432.7h4M1039.5 432.7h4M1045.5 432.7h7M1025 438.7h7M1034 438.7h7M1042 438.7h7M1051 438.7h6M1067.5 441.7h2M1070 441.7h6M1078 441.7h4M1083 441.7h2M1086 441.7h3M1036.5 447.7h4M1041.5 447.7h6M1049.5 447.7h2M1052 447.7h4M1032 463.7h6M1038.5 463.7h7M1047.5 463.7h5M1053 463.7h3M1039.5 465.7h7M1047 465.7h6M1022 467.7h4M1026.5 467.7h4M1050 467.7h4M1055 467.7h5M1061 467.7h7M1069 467.7h7M1077 467.7h4M1083 467.7h2M1086 467.7h3M1027 470.7h7M1035 470.7h5M1041 470.7h4M1051 470.7h3M1054.5 470.7h2M1058.5 470.7h2M1061 470.7h7M1070 470.7h4M1075 470.7h2M1078 470.7h1M1022 472.7h5M1028 472.7h6M1034.5 472.7h3M1038.5 472.7h4M1055.5 472.7h2M1058 472.7h4M1030 480.7h5M1036 480.7h6M1043 480.7h5M1048.5 480.7h2M1072 480.7h1M1027 482.7h6M1035 482.7h5M1041 482.7h7M1050 482.7h3M1054 482.7h4M1060 482.7h5M1025 485.7h2M1029 485.7h3M1032.5 485.7h3M1037.5 485.7h2M1040 485.7h5M1046 485.7h4M1071.5 485.7h5M1044.5 487.7h2M1048.5 487.7h4M1053.5 487.7h6M1025 490.7h6M1037.5 490.7h5M1020 500.7h7M1067 503.7h6M1074 503.7h2M1018 506.7h4M1024 506.7h4M1029 506.7h6M1030 512.7h6M1037 512.7h2M1040 512.7h6M1047 512.7h2M1051 512.7h7M1060 512.7h4M1066 515.7h5M1071.5 515.7h3M1075.5 515.7h4M1018 518.7h6M1018 527.7h7M1050.5 527.7h5M1057.5 527.7h5M1063 527.7h6M1089 532.7h3M1054.5 535.7h5M1060 535.7h3M1064 535.7h3M1068 535.7h5M1079 535.7h4M1083.5 535.7h4M1089.5 535.7h5M1049.5 538.7h4M1055.5 538.7h3M1059 538.7h4M1022 541.7h7M1092 544.7h4M1043 547.7h5M1049 547.7h2M1027 550.7h2M1059 552.7h7M1067 552.7h1M1052 558.7h7M1059.5 558.7h7M1068.5 558.7h6M1076.5 558.7h4M1023.5 561.7h7M1032.5 561.7h3M1036.5 561.7h2M1039 561.7h3M1043 561.7h6M1051 561.7h5M1020 570.7h5M1026 570.7h2M1028.5 570.7h2M1031.5 570.7h2M1035.5 570.7h3M1039 570.7h7M1032 572.7h6M1039 572.7h7M1047 572.7h4M1052 572.7h6M1060 572.7h3M1030 574.7h2M1033 574.7h3M1038 574.7h2M1041 574.7h5M1046.5 574.7h6M1085.5 574.7h2M1087.5 576.7h4M1092.5 576.7h4M1097.5 576.7h3.5M1018 578.7h4M1022.5 578.7h7M1030.5 578.7h3M1034 578.7h6M1035 581.7h6M1042 581.7h6M1049 581.7h3M1053 586.7h4M1048.5 595.7h3M1052.5 595.7h7M1060 595.7h6M1073.5 595.7h5M1079.5 595.7h2M1082 595.7h2M1085 595.7h7M1093 595.7h4M1099 595.7h2M1022 598.7h5M1090.5 598.7h7M1098 598.7h2M1021 602.7h4M1032 602.7h7M1022 605.7h4M1027 605.7h7M1035 605.7h7M1030 608.7h7M1022 616.7h5M1029 616.7h2M1038.5 616.7h7M1046.5 616.7h5M1053.5 616.7h2M1057.5 616.7h7M1065 616.7h3M1026.5 621.7h2M1029.5 621.7h5M1036.5 621.7h2M1040.5 621.7h5M1046.5 621.7h2M1049 621.7h3M1059.5 625.7h6M1067.5 625.7h7M1082.5 625.7h4M1025 628.7h4M1030 628.7h6M1025 630.7h2M1028 630.7h5M1054 630.7h5M1023 633.7h4M1028 633.7h6M1035 633.7h6M1043 633.7h7M1052 633.7h4M1039 636.7h3M1044 636.7h4M1049 636.7h7M1056.5 636.7h7M1064 636.7h2M1067 636.7h3M1072 636.7h7M1079.5 636.7h3M1038.5 639.7h7M1046.5 639.7h7M1051.5 643.7h4M1056 643.7h3M1060 643.7h6M1039 649.7h2M1042 649.7h6M1048.5 649.7h6M1055 649.7h4M1060 649.7h4M1065 649.7h5M1070.5 649.7h6M1077.5 649.7h5M1036.5 651.7h3M1040.5 651.7h4M1045.5 651.7h5M1032.5 653.7h4M1037.5 653.7h7M1045 653.7h4M1051 653.7h3M1056 653.7h2M1059 653.7h2M1018 658.7h2M1021 658.7h3M1025 658.7h6M1032 658.7h7M1039.5 658.7h5M1045.5 658.7h5M1051.5 658.7h3M1042 663.7h5M1047.5 663.7h6M1055.5 663.7h5M1062.5 663.7h2M1065 663.7h4M1070 663.7h4M1075 663.7h7M1082.5 663.7h4M1088.5 663.7h4M1093.5 663.7h1M1018 669.7h5M1024 669.7h2M1028 669.7h7M1030 671.7h7M1048 673.7h2M1051 673.7h3M1055 673.7h4M1018 678.7h3M1022 678.7h4M1060 680.7h7M1068 680.7h7M1076 680.7h7M1083.5 680.7h5M1032 687.7h2M1035 687.7h2M1037.5 687.7h6M1044 687.7h3M1048 687.7h2M1050.5 687.7h7M1059.5 687.7h7M1075 687.7h2M1084 687.7h3M1088 687.7h4M1093 687.7h7M1018 689.7h4M1024 689.7h3M1029 689.7h6M1036 689.7h4M1041 689.7h5M1046.5 689.7h7M1054.5 689.7h5M1061.5 689.7h7M1025 692.7h6M1032 692.7h4M1055.5 703.7h7M1071 703.7h5M1020 705.7h2M1022 707.7h3M1071.5 707.7h6M1086 707.7h2M1089 707.7h4M1094 707.7h3M1025 710.7h3M1030 710.7h5M1049.5 710.7h6M1056 710.7h5M1062 710.7h5M1067.5 710.7h5M1034.5 716.7h5M1041.5 716.7h4M1052 716.7h3M1055.5 716.7h2M1034.5 720.7h5M1041.5 720.7h2M1044 720.7h6M1050.5 720.7h2M1091 720.7h2M1018 723.7h3M1022 723.7h4M1069 723.7h7M1071.5 726.7h4M1077.5 726.7h4M1083.5 726.7h6M1090.5 726.7h6M1097.5 726.7h2M1032 734.7h4M1022 739.7h7M1031 739.7h2M1033.5 739.7h3M1037.5 739.7h3M1041.5 739.7h6M1053.5 750.7h7M1061 750.7h2M1065 750.7h5M1020 755.7h5M1026 755.7h5M1060.5 755.7h2M1064.5 755.7h6" stroke="#1f2f80" stroke-width="1.4" opacity="0.5" fill="none"/><path d="M1052.5 156.7h2M1021 160.7h5M1096 166.7h3M1069.5 172.7h3M1073 172.7h4M1078 172.7h4M1082.5 172.7h2M1083 177.7h7M1091 177.7h1M1027 180.7h5M1051 180.7h3M1055 180.7h3M1062 180.7h7M1025.5 182.7h2M1028.5 182.7h2M1031.5 182.7h6M1038.5 182.7h2M1041 182.7h2M1068.5 182.7h4M1073.5 182.7h5M1079 182.7h7M1087 182.7h3M1018 185.7h6M1030 185.7h5M1036 185.7h5M1043 185.7h3M1095.5 190.7h1M1053 192.7h6M1061 192.7h3M1066 192.7h6M1073 192.7h7M1081 192.7h4M1056.5 194.7h6M1064.5 194.7h5M1070.5 194.7h5M1076 194.7h2M1079 194.7h5M1085 194.7h5M1091 194.7h3M1095 194.7h4M1020 198.7h4M1025 198.7h7M1033 198.7h5M1039 198.7h5M1045 198.7h2M1047.5 198.7h4M1053.5 198.7h3M1057.5 198.7h5M1088.5 198.7h5M1044 203.7h7M1052 203.7h4M1057 203.7h4M1020 212.7h4M1024.5 212.7h5M1030 212.7h7M1038 212.7h2M1042 212.7h3M1056 214.7h6M1063 214.7h4M1067.5 214.7h4M1022 223.7h5M1037 223.7h5M1042.5 223.7h7M1050.5 223.7h3M1054 223.7h2M1051 234.7h7M1059 234.7h6M1066 234.7h2M1069 234.7h6M1075.5 234.7h5M1081.5 234.7h6M1088.5 234.7h2M1091.5 234.7h6M1098.5 234.7h2.5M1034.5 237.7h6M1022 265.7h7M1050.5 265.7h5M1056.5 265.7h4M1070 265.7h2M1074 265.7h5M1080 265.7h6M1035 267.7h3M1039 267.7h2M1057.5 267.7h7M1065.5 267.7h6M1048.5 269.7h7M1056.5 269.7h5M1062.5 269.7h7M1064.5 277.7h2M1068.5 277.7h2M1072.5 277.7h4M1077.5 277.7h4M1065.5 279.7h7M1074.5 279.7h3M1079.5 279.7h7M1087.5 279.7h3M1091 279.7h2M1065 284.7h3M1033 286.7h4M1038 286.7h4M1049 286.7h6M1020 288.7h4M1025 288.7h3M1028.5 288.7h3M1033.5 288.7h7M1042.5 288.7h7M1050 288.7h2M1054 288.7h5M1061 288.7h5M1068 288.7h6M1074.5 288.7h6M1062.5 291.7h2M1090.5 291.7h5M1096.5 291.7h4.5M1049.5 300.7h5M1055.5 300.7h5M1040.5 302.7h3M1044 302.7h4M1048.5 302.7h7M1045.5 308.7h2M1020 316.7h7M1027.5 316.7h2M1030.5 316.7h3M1034.5 316.7h3M1058.5 318.7h3M1066.5 318.7h5M1073.5 318.7h3M1073 320.7h7M1080.5 320.7h4M1020 322.7h6M1028 322.7h5M1034 322.7h3M1027 328.7h4M1032 328.7h5M1038 328.7h4M1043 328.7h6M1050 328.7h2M1052.5 328.7h6M1059 328.7h4M1063.5 328.7h6M1037 334.7h4M1042 334.7h6M1050 334.7h7M1063 334.7h5M1069 334.7h3M1073 334.7h6M1080 334.7h6M1095.5 339.7h1M1020 341.7h2M1024 341.7h6M1053 341.7h3M1058 341.7h6M1065 341.7h4M1071 341.7h3M1075 341.7h5M1081 341.7h3M1085 341.7h3M1090 341.7h3M1094 341.7h4M1098.5 341.7h2.5M1075.5 352.7h4M1047 360.7h2M1082.5 360.7h5M1088.5 360.7h5M1027 362.7h7M1068.5 362.7h5M1074.5 362.7h2M1030 365.7h6M1037 365.7h7M1041 374.7h6M1048 374.7h4M1027 379.7h3M1031 379.7h3M1035 379.7h5M1041 379.7h3M1045 379.7h5M1051 379.7h4M1078 379.7h2M1082 379.7h6M1090 379.7h1M1025 403.7h2M1029 403.7h3M1034 403.7h7M1041.5 403.7h4M1040.5 409.7h3M1057 409.7h7M1065 409.7h2M1067.5 409.7h7M1075.5 409.7h6M1082.5 409.7h3M1086.5 409.7h6M1054.5 418.7h6M1062.5 418.7h6M1069.5 418.7h6M1020 421.7h3M1024 421.7h6M1065 421.7h2M1069 421.7h6M1076 421.7h1M1076 423.7h5M1025 426.7h5M1067.5 426.7h6M1037 428.7h4M1056.5 428.7h3M1066 428.7h3M1071 428.7h7M1089 428.7h5M1089.5 441.7h3M1094.5 441.7h2M1097.5 441.7h2M1043.5 444.7h3M1062.5 452.7h2M1065.5 452.7h2M1069.5 452.7h7M1077 452.7h2M1080 452.7h4M1086 452.7h2M1089 452.7h4M1093.5 452.7h3M1098.5 452.7h2.5M1039.5 467.7h3M1043.5 467.7h2M1047.5 467.7h2M1046 470.7h4M1063 472.7h2M1050.5 485.7h2M1053 485.7h7M1078.5 485.7h2M1081.5 485.7h7M1089.5 485.7h3M1093.5 485.7h7M1060.5 487.7h6M1067 487.7h5M1073 487.7h3M1078 487.7h3M1082 487.7h7M1031.5 490.7h4M1034 492.7h4M1040 492.7h7M1048 492.7h4M1054 492.7h6M1061 492.7h5M1040.5 500.7h6M1047.5 500.7h3M1051.5 500.7h4M1056 500.7h7M1070 500.7h5M1076 500.7h2M1027 503.7h4M1033 503.7h5M1039 503.7h6M1046 503.7h5M1053 503.7h5M1059 503.7h6M1066 512.7h5M1072 512.7h7M1079.5 512.7h6M1022 515.7h5M1029 515.7h7M1038 515.7h6M1044.5 515.7h5M1050.5 515.7h4M1056.5 515.7h2M1059.5 515.7h6M1022 521.7h6M1028.5 521.7h6M1036.5 521.7h5M1061 532.7h6M1068 532.7h7M1076 532.7h7M1084 532.7h3M1093 532.7h4M1044 535.7h2M1022 538.7h4M1027 538.7h2M1025 547.7h7M1051.5 547.7h6M1051 550.7h7M1058.5 550.7h7M1066.5 550.7h4M1071.5 550.7h5M1077 550.7h3M1025 552.7h6M1032 552.7h4M1038 552.7h4M1043 552.7h6M1050 552.7h3M1055 552.7h3M1081.5 558.7h2M1078 572.7h5M1084 572.7h4M1030 581.7h4M1058 586.7h2M1022 595.7h2M1025 595.7h5M1039 595.7h4M1043.5 595.7h4M1079.5 598.7h7M1087.5 598.7h2M1025.5 602.7h6M1041 602.7h2M1045 602.7h3M1050 602.7h4M1054.5 602.7h2M1074 605.7h6M1081 605.7h7M1088.5 605.7h4M1030.5 614.7h7M1038.5 614.7h2M1041.5 614.7h2M1044 614.7h5M1020 621.7h6M1052.5 621.7h4M1018 623.7h5M1023.5 623.7h2M1027.5 623.7h7M1063.5 628.7h3M1084.5 636.7h4M1054 639.7h5M1020 643.7h4M1020 649.7h4M1026 649.7h6M1034 649.7h4M1018 651.7h2M1021 651.7h4M1026 651.7h4M1031 651.7h5M1027 663.7h6M1034 663.7h7M1054 666.7h7M1063 666.7h7M1071 666.7h6M1091.5 666.7h7M1099.5 666.7h1.5M1051.5 669.7h3M1056.5 669.7h3M1037.5 671.7h4M1042 671.7h2M1045 671.7h2M1037 673.7h5M1043 673.7h4M1027 680.7h3M1030.5 680.7h5M1045 680.7h5M1052 680.7h7M1027 687.7h4M1092.5 689.7h7M1056 692.7h2M1022 700.7h5M1029 700.7h7M1038 700.7h3M1063 703.7h7M1077 703.7h1M1022.5 705.7h4M1027.5 705.7h5M1034.5 705.7h2M1037 705.7h6M1044 705.7h4M1051.5 707.7h3M1055.5 707.7h3M1059.5 707.7h2M1062.5 707.7h7M1025 716.7h2M1028 716.7h6M1025 720.7h4M1086.5 720.7h4M1026.5 723.7h6M1033 723.7h6M1047 723.7h7M1076.5 723.7h5M1022 726.7h6M1029 726.7h5M1036 726.7h5M1025 729.7h7M1033 729.7h5M1058 734.7h3M1062 734.7h1" stroke="#880000" stroke-width="1.4" opacity="0.5" fill="none"/><path d="M1018 158.7h2M1021 158.7h2M1024 158.7h2M1027 158.7h5M1033 158.7h5M1039 158.7h3M1043 158.7h3M1047 158.7h5M1053 158.7h3M1057 158.7h3M1061 158.7h5M1067 158.7h5M1073 158.7h2M1076 158.7h5M1082 158.7h5M1088 158.7h3M1092 158.7h2M1095 158.7h4M1030 164.7h3M1034 164.7h4M1039 164.7h4M1044 164.7h2M1047 164.7h5M1053 164.7h2M1056 164.7h5M1062 164.7h2M1065 164.7h5M1071 164.7h2M1074 164.7h5M1080 164.7h5M1086 164.7h2M1089 164.7h2M1092 164.7h2M1095 164.7h2M1098 164.7h2M1027 188.7h5M1033 188.7h5M1039 188.7h3M1043 188.7h2M1046 188.7h5M1052 188.7h2M1055 188.7h2M1058 188.7h2M1061 188.7h3M1065 188.7h4M1027 196.7h2M1030 196.7h2M1033 196.7h5M1039 196.7h5M1045 196.7h5M1051 196.7h4M1056 196.7h2M1059 196.7h2M1062 196.7h4M1067 196.7h3M1071 196.7h2M1074 196.7h4M1079 196.7h5M1020 201.7h5M1026 201.7h3M1030 201.7h3M1034 201.7h5M1040 201.7h4M1045 201.7h5M1051 201.7h5M1057 201.7h4M1062 201.7h4M1067 201.7h4M1072 201.7h3M1076 201.7h5M1082 201.7h5M1088 201.7h2M1091 201.7h2M1094 201.7h5M1025 232.7h4M1030 232.7h2M1033 232.7h2M1036 232.7h3M1040 232.7h5M1046 232.7h5M1052 232.7h2M1055 232.7h5M1061 232.7h4M1066 232.7h5M1072 232.7h5M1018 243.7h4M1023 243.7h4M1028 243.7h5M1034 243.7h2M1037 243.7h3M1041 243.7h4M1046 243.7h3M1050 243.7h3M1054 243.7h3M1058 243.7h4M1063 243.7h2M1066 243.7h3M1070 243.7h3M1074 243.7h2M1077 243.7h5M1083 243.7h5M1089 243.7h2M1022 271.7h4M1027 271.7h4M1032 271.7h4M1037 271.7h4M1042 271.7h4M1047 271.7h3M1051 271.7h5M1057 271.7h5M1022 273.7h3M1026 273.7h2M1029 273.7h2M1032 273.7h5M1038 273.7h5M1044 273.7h2M1047 273.7h4M1052 273.7h2M1055 273.7h5M1061 273.7h5M1067 273.7h5M1073 273.7h5M1079 273.7h2M1082 273.7h3M1086 273.7h4M1091 273.7h4M1096 273.7h5M1018 275.7h4M1023 275.7h3M1027 275.7h4M1032 275.7h3M1036 275.7h3M1040 275.7h2M1043 275.7h5M1049 275.7h2M1052 275.7h3M1056 275.7h5M1062 275.7h2M1020 294.7h5M1026 294.7h2M1029 294.7h3M1033 294.7h4M1038 294.7h2M1041 294.7h4M1046 294.7h4M1051 294.7h4M1056 294.7h4M1061 294.7h3M1065 294.7h2M1068 294.7h2M1071 294.7h3M1075 294.7h4M1080 294.7h4M1085 294.7h5M1091 294.7h3M1018 325.7h4M1023 325.7h4M1028 325.7h4M1033 325.7h3M1037 325.7h4M1042 325.7h5M1048 325.7h2M1051 325.7h4M1056 325.7h2M1059 325.7h4M1064 325.7h4M1018 354.7h5M1024 354.7h5M1030 354.7h4M1035 354.7h5M1041 354.7h2M1044 354.7h2M1047 354.7h3M1051 354.7h3M1055 354.7h2M1058 354.7h3M1062 354.7h3M1066 354.7h4M1071 354.7h4M1076 354.7h4M1025 357.7h5M1031 357.7h3M1035 357.7h4M1040 357.7h2M1043 357.7h2M1046 357.7h2M1049 357.7h4M1054 357.7h5M1060 357.7h5M1027 382.7h2M1030 382.7h3M1034 382.7h4M1039 382.7h2M1042 382.7h5M1048 382.7h4M1053 382.7h3M1057 382.7h2M1060 382.7h4M1065 382.7h3M1069 382.7h4M1074 382.7h2M1077 382.7h3M1018 384.7h5M1024 384.7h3M1028 384.7h4M1033 384.7h3M1037 384.7h2M1040 384.7h3M1044 384.7h2M1047 384.7h5M1053 384.7h3M1057 384.7h4M1062 384.7h5M1068 384.7h3M1018 389.7h5M1024 389.7h2M1027 389.7h5M1033 389.7h5M1039 389.7h2M1042 389.7h3M1046 389.7h2M1049 389.7h5M1055 389.7h3M1059 389.7h5M1027 394.7h2M1030 394.7h3M1034 394.7h4M1039 394.7h4M1044 394.7h3M1048 394.7h2M1051 394.7h2M1054 394.7h4M1059 394.7h3M1063 394.7h3M1067 394.7h5M1073 394.7h4M1078 394.7h2M1081 394.7h5M1087 394.7h4M1092 394.7h5M1022 400.7h2M1025 400.7h2M1028 400.7h2M1031 400.7h4M1036 400.7h4M1041 400.7h4M1046 400.7h5M1052 400.7h3M1056 400.7h3M1060 400.7h3M1064 400.7h2M1067 400.7h5M1020 406.7h5M1026 406.7h3M1030 406.7h2M1033 406.7h3M1037 406.7h2M1040 406.7h3M1044 406.7h5M1050 406.7h5M1056 406.7h3M1060 406.7h5M1027 412.7h4M1032 412.7h3M1036 412.7h4M1041 412.7h5M1047 412.7h3M1051 412.7h4M1056 412.7h5M1062 412.7h2M1065 412.7h4M1070 412.7h3M1074 412.7h4M1079 412.7h3M1083 412.7h4M1088 412.7h3M1092 412.7h5M1098 412.7h3M1020 435.7h3M1024 435.7h5M1030 435.7h4M1035 435.7h3M1039 435.7h5M1045 435.7h5M1051 435.7h2M1054 435.7h4M1059 435.7h2M1062 435.7h5M1068 435.7h2M1071 435.7h3M1020 458.7h2M1023 458.7h2M1026 458.7h5M1032 458.7h4M1037 458.7h2M1040 458.7h2M1043 458.7h2M1046 458.7h5M1052 458.7h2M1055 458.7h5M1061 458.7h2M1064 458.7h5M1070 458.7h3M1074 458.7h4M1079 458.7h5M1085 458.7h4M1090 458.7h2M1093 458.7h2M1096 458.7h5M1020 460.7h2M1023 460.7h3M1027 460.7h2M1030 460.7h5M1036 460.7h3M1040 460.7h3M1044 460.7h3M1048 460.7h3M1052 460.7h5M1058 460.7h3M1062 460.7h2M1065 460.7h3M1069 460.7h4M1074 460.7h3M1078 460.7h4M1018 478.7h4M1023 478.7h5M1029 478.7h2M1032 478.7h3M1036 478.7h5M1042 478.7h4M1047 478.7h2M1050 478.7h5M1056 478.7h3M1030 497.7h5M1036 497.7h3M1040 497.7h5M1046 497.7h4M1051 497.7h4M1056 497.7h3M1060 497.7h2M1063 497.7h3M1067 497.7h3M1071 497.7h3M1075 497.7h3M1079 497.7h3M1083 497.7h4M1088 497.7h2M1091 497.7h5M1018 508.7h2M1021 508.7h3M1025 508.7h4M1030 508.7h5M1036 508.7h2M1039 508.7h3M1043 508.7h2M1046 508.7h4M1051 508.7h2M1054 508.7h4M1059 508.7h3M1063 508.7h5M1027 510.7h2M1030 510.7h2M1033 510.7h2M1036 510.7h2M1039 510.7h2M1042 510.7h2M1045 510.7h3M1049 510.7h4M1054 510.7h5M1060 510.7h4M1065 510.7h3M1025 555.7h3M1029 555.7h2M1032 555.7h4M1037 555.7h5M1043 555.7h5M1049 555.7h2M1052 555.7h3M1056 555.7h2M1059 555.7h2M1062 555.7h5M1068 555.7h5M1074 555.7h2M1077 555.7h4M1082 555.7h3M1086 555.7h3M1027 584.7h3M1031 584.7h5M1037 584.7h2M1040 584.7h2M1043 584.7h2M1046 584.7h5M1052 584.7h3M1056 584.7h2M1059 584.7h2M1062 584.7h2M1065 584.7h4M1070 584.7h5M1076 584.7h5M1018 600.7h5M1024 600.7h5M1030 600.7h4M1035 600.7h2M1038 600.7h5M1044 600.7h3M1048 600.7h3M1052 600.7h5M1058 600.7h2M1061 600.7h4M1066 600.7h5M1072 600.7h3M1076 600.7h4M1022 619.7h4M1027 619.7h3M1031 619.7h5M1037 619.7h3M1041 619.7h5M1047 619.7h2M1050 619.7h2M1053 619.7h5M1059 619.7h5M1065 619.7h2M1025 660.7h2M1028 660.7h5M1034 660.7h2M1037 660.7h3M1041 660.7h2M1044 660.7h4M1049 660.7h2M1052 660.7h4M1057 660.7h3M1061 660.7h3M1065 660.7h4M1070 660.7h3M1074 660.7h5M1080 660.7h5M1086 660.7h5M1092 660.7h3M1030 676.7h2M1033 676.7h5M1039 676.7h2M1042 676.7h3M1046 676.7h2M1049 676.7h3M1053 676.7h2M1056 676.7h5M1062 676.7h5M1068 676.7h3M1072 676.7h5M1078 676.7h4M1083 676.7h3M1087 676.7h3M1091 676.7h4M1096 676.7h3M1020 685.7h3M1024 685.7h4M1029 685.7h4M1034 685.7h4M1039 685.7h4M1044 685.7h5M1050 685.7h3M1054 685.7h3M1020 697.7h2M1023 697.7h4M1028 697.7h3M1032 697.7h5M1038 697.7h3M1042 697.7h2M1045 697.7h2M1048 697.7h5M1054 697.7h4M1059 697.7h3M1063 697.7h4M1025 713.7h5M1031 713.7h4M1036 713.7h3M1040 713.7h5M1046 713.7h5M1052 713.7h4M1057 713.7h4M1062 713.7h5M1068 713.7h5M1074 713.7h4M1079 713.7h4M1084 713.7h5M1090 713.7h2M1093 713.7h3M1097 713.7h4M1022 718.7h5M1028 718.7h2M1031 718.7h4M1036 718.7h5M1042 718.7h4M1047 718.7h3M1051 718.7h2M1054 718.7h5M1060 718.7h2M1063 718.7h4M1068 718.7h5M1074 718.7h5M1080 718.7h4M1085 718.7h3M1089 718.7h2M1092 718.7h3M1096 718.7h3M1100 718.7h1M1018 732.7h3M1022 732.7h4M1027 732.7h2M1030 732.7h5M1036 732.7h5M1042 732.7h3M1046 732.7h5M1052 732.7h3M1056 732.7h5M1018 745.7h3M1022 745.7h5M1028 745.7h2M1031 745.7h4M1036 745.7h2M1039 745.7h4M1044 745.7h4M1049 745.7h3M1053 745.7h2M1056 745.7h2M1059 745.7h3M1063 745.7h2M1066 745.7h4M1071 745.7h5M1077 745.7h4M1082 745.7h3M1086 745.7h3M1090 745.7h3" stroke="#008000" stroke-width="1.4" opacity="0.45" fill="none"/></svg>
<div style="left:1001px;top:543px;width:100px;height:10px;background:#fff;border:1px solid #000;border-radius:2px"></div>
<div style="left:1002px;top:546px;width:98px;height:2px;background:#0000cd"></div>
<div style="left:1007px;top:545px;width:5px;height:5px;background:#8b2252"></div>
<div class="sb" style="left:303px;top:775px;width:798px;height:15px;"></div>
<div style="left:304px;top:775px;width:58px;height:15px;background:#fff;border:1px solid #c9cbd6"></div>
<div class="t ui sm" style="left:306px;top:775px;;letter-spacing:-0.91px">100 %</div>
<svg style="left:353px;top:781px" width="7" height="4" viewBox="0 0 7 4"><path d="M0.500 0h6l-3 3.200z" fill="#1e1e1e"/></svg>
<svg style="left:388px;top:777px" width="11" height="11" viewBox="0 0 11 11"><circle cx="5.500" cy="5.500" r="5.500" fill="#1f9c3a"/><path d="M2.800 5.600l2 2 3.500-3.800" fill="none" stroke="#fff" stroke-width="1.500"/></svg>
<div class="t ui sm" style="left:403px;top:775px;;letter-spacing:-0.14px">No issues found</div>
<svg style="left:563px;top:778px" width="5" height="9" viewBox="0 0 5 9"><path d="M5 0v9l-5 -4.5z" fill="#868999"/></svg>
<div class="th" style="left:573px;top:778px;width:77px;height:9px;"></div>
<svg style="left:825px;top:778px" width="5" height="9" viewBox="0 0 5 9"><path d="M0 0v9l5 -4.5z" fill="#868999"/></svg>
<div class="t ui sm" style="left:858px;top:775px;;letter-spacing:-0.58px">Ln: 1565</div>
<div class="t ui sm" style="left:918px;top:775px;;letter-spacing:-0.48px">Ch: 25</div>
<div class="t ui sm" style="left:968px;top:775px;;letter-spacing:-0.39px">Col: 37</div>
<div class="t ui sm" style="left:1022px;top:775px;font-size:11px;letter-spacing:-0.98px">TABS</div>
<div class="t ui sm" style="left:1066px;top:775px;font-size:11px;letter-spacing:-0.81px">CRLF</div>
<div style="left:1109px;top:71px;width:112px;height:19px;background:#f5cc84"></div>
<div style="left:1109px;top:90px;width:804px;height:2px;background:#f5cc84"></div>
<div class="t ui tb" style="left:1113px;top:74px;color:#1e1e1e;letter-spacing:-0.18px">Disassembly</div>
<svg style="left:1188px;top:79px" width="10" height="8" viewBox="0 0 10 8"><path d="M0 4h3.5M3.5 1v6M3.5 2h5v4h-5M8.5 0.5v7" fill="none" stroke="#3a2e10" stroke-width="1"/></svg>
<svg style="left:1207px;top:78px" width="9" height="9" viewBox="0 0 9 9"><path d="M0.5 0.5L8.5 8.5M8.5 0.5L0.5 8.5" stroke="#3a2e10" stroke-width="1.3" fill="none"/></svg>
<svg style="left:1903px;top:80px" width="8" height="4" viewBox="0 0 8 4"><path d="M0 0h8l-4.0 4z" fill="#dfe3f3"/></svg>
<div class="lav" style="left:1109px;top:92px;width:804px;height:24px;"></div>
<div class="t ui" style="left:1116px;top:96px;;letter-spacing:-0.36px"><u>A</u>ddress:</div>
<div style="left:1167px;top:95px;width:738px;height:18px;background:#fdfdfe;border:1px solid #d5dbee"></div>
<div class="t ui" style="left:1170px;top:96px;;letter-spacing:-0.06px">FViewport::Draw(bool)</div>
<svg style="left:1895px;top:103px" width="7" height="4" viewBox="0 0 7 4"><path d="M0.500 0h6l-3 3.200z" fill="#1e1e1e"/></svg>
<div style="left:1109px;top:116px;width:804px;height:23px;background:#fff"></div>
<div style="left:1112px;top:118px;width:18px;height:18px;border:1px solid #c9d2ee;border-radius:9px;background:#f5f7ff"></div>
<svg style="left:1117px;top:124px" width="9" height="6" viewBox="0 0 9 6"><path d="M0.800 0.800L4.500 4.500 8.200 0.800" fill="none" stroke="#1e1e1e" stroke-width="1.800"/></svg>
<div class="t ui" style="left:1134px;top:120px;;letter-spacing:0.07px">Viewing Options</div>
<div style="left:1109px;top:139px;width:785px;height:636px;background:#fff"></div>
<div style="left:1109px;top:139px;width:17px;height:636px;background:#e6e7e8"></div>
<div style="left:1126px;top:139px;width:768px;height:636px;overflow:hidden">
<div class="mono" style="left:114px;top:0px;color:#111">UWorld* ViewportWorld = ViewportClient-&gt;GetWorld();</div>
<div class="mono" style="left:114px;top:16px;color:#111">FCanvas Canvas(this, nullptr, ViewportWorld, ViewportWorld ? ViewportWorld-&gt;FeatureLevel.GetValue() : GMaxRHIFeatureLevel);</div>
<div class="mono g" style="left:2px;top:32px">0x0000007176368b88  mov        x0, x8</div>
<div class="mono g" style="left:2px;top:48px">0x0000007176368b8c  ldr        x1, [sp, #0x40]</div>
<div class="mono g" style="left:2px;top:64px">0x0000007176368b90  ldr        x2, [sp, #0x20]</div>
<div class="mono g" style="left:2px;top:80px">0x0000007176368b94  ldr        x3, [sp, #0x38]</div>
<div class="mono g" style="left:2px;top:96px">0x0000007176368b98  ldr        w4, [sp, #0x30]</div>
<div class="mono g" style="left:2px;top:112px">0x0000007176368b9c  mov        w5, w9</div>
<div class="mono g" style="left:2px;top:128px">0x0000007176368ba0  str        x8, [sp, #0x18]</div>
<div class="mono g" style="left:2px;top:144px">0x0000007176368ba4  str        w9, [sp, #0x14]</div>
<div class="mono g" style="left:2px;top:160px">0x0000007176368ba8  bl         0x7176480460                   # FCanvas::FCanvas at Canvas.cpp:286</div>
<div class="mono g" style="left:2px;top:176px">0x0000007176368bac  ldr        x8, [sp, #0xa8]</div>
<div class="mono" style="left:114px;top:192px;color:#111">Canvas.SetRenderTargetRect(FIntRect(0, 0, SizeX, SizeY));</div>
<div class="mono g" style="left:2px;top:208px">0x0000007176368bb0  ldr        w3, [x8, #0xa8]</div>
<div class="mono g" style="left:2px;top:224px">0x0000007176368bb4  ldr        w4, [x8, #0xac]</div>
<div class="mono g" style="left:2px;top:240px">0x0000007176368bb8  add        x10, sp, #0x118                # =0x118</div>
<div class="mono g" style="left:2px;top:256px">0x0000007176368bbc  mov        x0, x10</div>
<div class="mono g" style="left:2px;top:272px">0x0000007176368bc0  ldr        w1, [sp, #0x14]</div>
<div class="mono g" style="left:2px;top:288px">0x0000007176368bc4  ldr        w2, [sp, #0x14]</div>
<div class="mono g" style="left:2px;top:304px">0x0000007176368bc8  str        x10, [sp, #0x8]</div>
<div class="mono g" style="left:2px;top:320px">0x0000007176368bcc  bl         0x717318c4fc                   # __AArch64ADRPThunk__ZN8FIntRectC2Eiiii</div>
<div class="mono g" style="left:2px;top:336px">0x0000007176368bd0  ldr        x0, [sp, #0x18]</div>
<div class="mono g" style="left:2px;top:352px">0x0000007176368bd4  ldr        x1, [sp, #0x8]</div>
<div class="mono g" style="left:2px;top:368px">0x0000007176368bd8  bl         0x7176483594                   # FCanvas::SetRenderTargetRect at Canvas.cpp:1031</div>
<div class="mono g" style="left:2px;top:384px">0x0000007176368bdc  mov        w1, #0x1</div>
<div class="mono g" style="left:2px;top:400px">0x0000007176368be0  ldr        x0, [sp, #0x18]</div>
<div class="mono" style="left:114px;top:416px;color:#111">{</div>
<div class="mono" style="left:142px;top:432px;color:#111">// Make sure the Canvas is not rendered upside down</div>
<div class="mono" style="left:142px;top:448px;color:#111">Canvas.SetAllowSwitchVerticalAxis(true);</div>
<div class="mono g" style="left:2px;top:464px">0x0000007176368be4  bl         0x7173422904                   # FCanvas::SetAllowSwitchVerticalAxis at CanvasTypes.h:1060</div>
<div class="mono g" style="left:2px;top:480px">0x0000007176368be8  ldr        x8, [sp, #0xa8]</div>
<div class="mono" style="left:142px;top:496px;color:#111">ViewportClient-&gt;Draw(this, &amp;Canvas);</div>
<div class="mono g" style="left:2px;top:512px">0x0000007176368bec  ldr        x10, [x8, #0x30]</div>
<div class="mono g" style="left:2px;top:528px">0x0000007176368bf0  ldr        x11, [x10]</div>
<div class="mono g" style="left:2px;top:544px">0x0000007176368bf4  ldr        x11, [x11, #0x28]</div>
<div class="mono g" style="left:2px;top:560px">0x0000007176368bf8  mov        x0, x10</div>
<div class="mono g" style="left:2px;top:576px">0x0000007176368bfc  mov        x1, x8</div>
<div class="mono g" style="left:2px;top:592px">0x0000007176368c00  ldr        x2, [sp, #0x18]</div>
<div class="mono g" style="left:2px;top:608px">0x0000007176368c04  blr        x11</div>
<div class="mono g" style="left:2px;top:624px">0x0000007176368c08  ldr        x0, [sp, #0x18]</div>
</div>
<svg style="left:1112px;top:348.5px" width="12" height="12" viewBox="0 0 12 12"><circle cx="6" cy="6" r="5.600" fill="#e51400"/><path d="M1.600 4.300h3.900V2L11.200 6 5.500 10V7.700H1.600z" fill="#ffd31a" stroke="#4a4020" stroke-width="0.700" stroke-linejoin="round"/></svg>
<svg style="left:1413px;top:526px" width="10" height="9" viewBox="0 0 10 9"><path d="M0.500 0.500v8l6-4z" fill="#4fae4f"/><rect x="8.200" y="0.500" width="1" height="8" fill="#4fae4f"/></svg>
<div class="sb" style="left:1894px;top:139px;width:19px;height:636px;"></div>
<svg style="left:1899px;top:145px" width="9" height="5" viewBox="0 0 9 5"><path d="M0 5h9l-4.5 -5z" fill="#a3a5ad"/></svg>
<svg style="left:1899px;top:763px" width="9" height="5" viewBox="0 0 9 5"><path d="M0 0h9l-4.5 5z" fill="#a3a5ad"/></svg>
<div class="th" style="left:1898px;top:433px;width:11px;height:65px;"></div>
<div style="left:1894px;top:453px;width:19px;height:2px;background:#0000cd"></div>
<div style="left:1901px;top:452px;width:5px;height:5px;background:#8b2252"></div>
<div class="sb" style="left:1109px;top:775px;width:804px;height:15px;"></div>
<div style="left:1110px;top:775px;width:58px;height:15px;background:#fff;border:1px solid #c9cbd6"></div>
<div class="t ui sm" style="left:1112px;top:775px;;letter-spacing:-0.91px">100 %</div>
<svg style="left:1159px;top:781px" width="7" height="4" viewBox="0 0 7 4"><path d="M0.500 0h6l-3 3.200z" fill="#1e1e1e"/></svg>
<svg style="left:1175px;top:778px" width="5" height="9" viewBox="0 0 5 9"><path d="M5 0v9l-5 -4.5z" fill="#868999"/></svg>
<div class="th" style="left:1186px;top:778px;width:271px;height:9px;"></div>
<svg style="left:1883px;top:778px" width="5" height="9" viewBox="0 0 5 9"><path d="M0 0v9l5 -4.5z" fill="#868999"/></svg>
<div class="ttl" style="left:7px;top:798px;width:946px;height:21px;"></div>
<div class="t ui w pt" style="left:11px;top:800px;;letter-spacing:-0.35px">Registers</div>
<svg style="left:905px;top:806px" width="8" height="4" viewBox="0 0 8 4"><path d="M0 0h8l-4.0 4z" fill="#b4bcdf"/></svg>
<svg style="left:922px;top:803px" width="8" height="11" viewBox="0 0 8 11"><path d="M1.500 6.500V0.500h4" fill="none" stroke="#b9c1e2" stroke-width="1"/><rect x="4.200" y="0" width="2.200" height="6.500" fill="#b9c1e2"/><rect x="0" y="6" width="7.400" height="1.300" fill="#b9c1e2"/><rect x="3.100" y="7.300" width="1.300" height="3.700" fill="#b9c1e2"/></svg>
<svg style="left:937.5px;top:804px" width="9" height="9" viewBox="0 0 9 9"><path d="M0.5 0.5L8.5 8.5M8.5 0.5L0.5 8.5" stroke="#b9c1e2" stroke-width="1.2" fill="none"/></svg>
<div style="left:7px;top:819px;width:946px;height:179px;background:#fff"></div>
<div style="left:7px;top:819px;width:927px;height:179px;overflow:hidden">
<div class="mono" style="left:5px;top:0px;color:#111"> x0 = 0x000000711e7921c0 x1 = 0x0000007506130bb0 x2 = 0x0000000000000010 x3 = 0x0000000000000000 x4 = 0x0000000000000000</div>
<div class="mono" style="left:5px;top:16px;color:#111">   x5 = 0x0000007152d95f00 x6 = 0x0000000000000000 x7 = 0x000000000aced4f8 x8 = 0x0000007129942008 x9 = 0x0000000000000000</div>
<div class="mono" style="left:5px;top:32px;color:#111">   x10 = 0xc88ff8c9d92cc32a x11 = 0x0000000000000000 x12 = 0x0000000000000002 x13 = 0x000000003f800000 x14 = 0x0000000000000010</div>
<div class="mono" style="left:5px;top:48px;color:#111">   x15 = 0x00000071790e3a84 x16 = 0x000000716c7a0470 x17 = 0x00000075060d4630 x18 = 0x000000719b1e4000 x19 = 0x000000719b96ecc0</div>
<div class="mono" style="left:5px;top:64px;color:#111">   x20 = 0x00000075061310a8 x21 = 0x000000719b96ecc0 x22 = 0x0000000000003a76 x23 = 0x0000000000003a76 x24 = 0x000000719b96ecc0</div>
<div class="mono" style="left:5px;top:80px;color:#111">   x25 = 0x000000719b96ecc0 x26 = 0x000000719b96eff8 x27 = 0x00000000000fe000 x28 = 0x00000000000fc000 fp = 0x000000719b96dac0</div>
<div class="mono" style="left:5px;top:96px;color:#111">   lr = 0x0000007176368bac sp = 0x000000719b96d820 pc = 0x0000007176368bb0 cpsr = 0x60000000 w0 = 0x1e7921c0 w1 = 0x06130bb0</div>
<div class="mono" style="left:5px;top:112px;color:#111">   w2 = 0x00000010 w3 = 0x00000000 w4 = 0x00000000</div>
<div class="mono" style="left:5px;top:128px;color:#111"> w5 = 0x52d95f00 w6 = 0x00000000 w7 = 0x0aced4f8 w8 = 0x29942008 w9 = 0x00000000 w10 = 0xd92cc32a w11 = 0x00000000 w12 = 0x00000002</div>
<div class="mono" style="left:5px;top:144px;color:#111">    w13 = 0x3f800000 w14 = 0x00000010 w15 = 0x790e3a84 w16 = 0x6c7a0470 w17 = 0x060d4630 w18 = 0x9b1e4000 w19 = 0x9b96ecc0</div>
<div class="mono" style="left:5px;top:160px;color:#111">   w20 = 0x061310a8 w21 = 0x9b96ecc0 w22 = 0x00003a76 w23 = 0x00003a76 w24 = 0x9b96ecc0 w25 = 0x9b96ecc0 w26 = 0x9b96eff8</div>
</div>
<div class="sb" style="left:934px;top:819px;width:19px;height:179px;"></div>
<svg style="left:939px;top:824px" width="9" height="5" viewBox="0 0 9 5"><path d="M0 5h9l-4.5 -5z" fill="#a3a5ad"/></svg>
<svg style="left:939px;top:986px" width="9" height="5" viewBox="0 0 9 5"><path d="M0 0h9l-4.5 5z" fill="#a3a5ad"/></svg>
<div style="left:934px;top:833px;width:19px;height:2px;background:#0000cd"></div>
<div class="th" style="left:938px;top:836px;width:11px;height:104px;"></div>
<div class="sb" style="left:7px;top:998px;width:946px;height:15px;"></div>
<div style="left:7px;top:998px;width:60px;height:15px;background:#fff;border:1px solid #c9cbd6"></div>
<div class="t ui sm" style="left:9px;top:998px;;letter-spacing:-0.77px">100 %</div>
<svg style="left:57px;top:1004px" width="7" height="4" viewBox="0 0 7 4"><path d="M0.500 0h6l-3 3.200z" fill="#1e1e1e"/></svg>
<svg style="left:73px;top:1001px" width="5" height="9" viewBox="0 0 5 9"><path d="M5 0v9l-5 -4.5z" fill="#c2c3c9"/></svg>
<svg style="left:923px;top:1001px" width="5" height="9" viewBox="0 0 5 9"><path d="M0 0v9l5 -4.5z" fill="#c2c3c9"/></svg>
<div class="ttl" style="left:7px;top:1014px;width:41px;height:18px;"></div>
<div class="t ui bt w" style="left:12px;top:1015px;;letter-spacing:0.16px">Autos</div>
<div class="ttl" style="left:50px;top:1014px;width:43px;height:18px;"></div>
<div class="t ui bt w" style="left:55px;top:1015px;;letter-spacing:-0.20px">Locals</div>
<div class="ttl" style="left:95px;top:1014px;width:51px;height:18px;"></div>
<div class="t ui bt w" style="left:100px;top:1015px;;letter-spacing:-0.36px">Threads</div>
<div style="left:148px;top:1013px;width:57px;height:20px;background:#f7f9fe"></div>
<div class="t ui bt" style="left:153px;top:1015px;color:#1e1e1e;letter-spacing:-0.35px">Registers</div>
<div class="ttl" style="left:207px;top:1014px;width:56px;height:18px;"></div>
<div class="t ui bt w" style="left:212px;top:1015px;;letter-spacing:0.16px">Modules</div>
<div class="ttl" style="left:265px;top:1014px;width:53px;height:18px;"></div>
<div class="t ui bt w" style="left:270px;top:1015px;;letter-spacing:-0.15px">Watch 1</div>
<div class="ttl" style="left:961px;top:798px;width:952px;height:21px;"></div>
<div class="t ui w pt" style="left:965px;top:800px;;letter-spacing:-0.22px">Call Stack</div>
<svg style="left:1865px;top:806px" width="8" height="4" viewBox="0 0 8 4"><path d="M0 0h8l-4.0 4z" fill="#b4bcdf"/></svg>
<svg style="left:1882px;top:803px" width="8" height="11" viewBox="0 0 8 11"><path d="M1.500 6.500V0.500h4" fill="none" stroke="#b9c1e2" stroke-width="1"/><rect x="4.200" y="0" width="2.200" height="6.500" fill="#b9c1e2"/><rect x="0" y="6" width="7.400" height="1.300" fill="#b9c1e2"/><rect x="3.100" y="7.300" width="1.300" height="3.700" fill="#b9c1e2"/></svg>
<svg style="left:1897.5px;top:804px" width="9" height="9" viewBox="0 0 9 9"><path d="M0.5 0.5L8.5 8.5M8.5 0.5L0.5 8.5" stroke="#b9c1e2" stroke-width="1.2" fill="none"/></svg>
<div style="left:961px;top:819px;width:952px;height:194px;background:#fff"></div>
<div style="left:961px;top:838px;width:935px;height:1px;background:#b9c4e8"></div>
<div style="left:978px;top:819px;width:1px;height:20px;background:#c9d2ee"></div>
<div style="left:1866px;top:819px;width:1px;height:20px;background:#c9d2ee"></div>
<div class="t ui" style="left:983px;top:821px;;letter-spacing:0.12px">Name</div>
<div class="t ui" style="left:1872px;top:821px;">Lang</div>
<div style="left:961px;top:856px;width:935px;height:1px;background:#eeeef2"></div>
<div style="left:978px;top:839px;width:1px;height:17px;background:#eeeef2"></div>
<div style="left:1866px;top:839px;width:1px;height:17px;background:#eeeef2"></div>
<div class="t ui cs" style="left:982px;top:840px;;letter-spacing:-0.14px">libUnreal.so!FViewport::Draw(bool)(FSceneViewport * this, bool bShouldPresent) Line 1564</div>
<div class="t ui cs" style="left:1871px;top:840px;">c++</div>
<div style="left:961px;top:873px;width:935px;height:1px;background:#eeeef2"></div>
<div style="left:978px;top:856px;width:1px;height:17px;background:#eeeef2"></div>
<div style="left:1866px;top:856px;width:1px;height:17px;background:#eeeef2"></div>
<div class="t ui cs" style="left:982px;top:857px;;letter-spacing:-0.17px">libUnreal.so!UGameEngine::RedrawViewports(bool)(UGameEngine * this, bool bShouldPresent) Line 702</div>
<div class="t ui cs" style="left:1871px;top:857px;">c++</div>
<div style="left:961px;top:890px;width:935px;height:1px;background:#eeeef2"></div>
<div style="left:978px;top:873px;width:1px;height:17px;background:#eeeef2"></div>
<div style="left:1866px;top:873px;width:1px;height:17px;background:#eeeef2"></div>
<div class="t ui cs" style="left:982px;top:874px;;letter-spacing:-0.13px">libUnreal.so!UGameEngine::Tick(float, bool)(UGameEngine * this, float DeltaSeconds, bool bIdleMode) Line 1939</div>
<div class="t ui cs" style="left:1871px;top:874px;">c++</div>
<div style="left:961px;top:907px;width:935px;height:1px;background:#eeeef2"></div>
<div style="left:978px;top:890px;width:1px;height:17px;background:#eeeef2"></div>
<div style="left:1866px;top:890px;width:1px;height:17px;background:#eeeef2"></div>
<div class="t ui cs" style="left:982px;top:891px;;letter-spacing:-0.18px">libUnreal.so!FEngineLoop::Tick()(FEngineLoop * this) Line 5113</div>
<div class="t ui cs" style="left:1871px;top:891px;">c++</div>
<div style="left:961px;top:924px;width:935px;height:1px;background:#eeeef2"></div>
<div style="left:978px;top:907px;width:1px;height:17px;background:#eeeef2"></div>
<div style="left:1866px;top:907px;width:1px;height:17px;background:#eeeef2"></div>
<div class="t ui cs" style="left:982px;top:908px;;letter-spacing:-0.07px">libUnreal.so!AndroidMain(android_app*)(android_app * state) Line 533</div>
<div class="t ui cs" style="left:1871px;top:908px;">c++</div>
<div style="left:961px;top:941px;width:935px;height:1px;background:#eeeef2"></div>
<div style="left:978px;top:924px;width:1px;height:17px;background:#eeeef2"></div>
<div style="left:1866px;top:924px;width:1px;height:17px;background:#eeeef2"></div>
<div class="t ui cs" style="left:982px;top:925px;;letter-spacing:-0.11px">libUnreal.so!android_main(android_app *)(android_app * state) Line 779</div>
<div class="t ui cs" style="left:1871px;top:925px;">c++</div>
<div style="left:961px;top:958px;width:935px;height:1px;background:#eeeef2"></div>
<div style="left:978px;top:941px;width:1px;height:17px;background:#eeeef2"></div>
<div style="left:1866px;top:941px;width:1px;height:17px;background:#eeeef2"></div>
<div class="t ui cs" style="left:982px;top:942px;;letter-spacing:-0.12px">libUnreal.so!android_app_entry(void * param) Line 232</div>
<div class="t ui cs" style="left:1871px;top:942px;">c99</div>
<div style="left:961px;top:975px;width:935px;height:1px;background:#eeeef2"></div>
<div style="left:978px;top:958px;width:1px;height:17px;background:#eeeef2"></div>
<div style="left:1866px;top:958px;width:1px;height:17px;background:#eeeef2"></div>
<div class="t ui cs" style="left:982px;top:959px;;letter-spacing:-0.12px">libc.so!__pthread_start(void*)()</div>
<div class="t ui cs" style="left:1871px;top:959px;">un...</div>
<div style="left:961px;top:976px;width:935px;height:17px;background:#f0f0f0"></div>
<div class="t ui cs" style="left:982px;top:976px;;letter-spacing:-0.26px">libc.so!__start_thread()</div>
<div class="t ui cs" style="left:1871px;top:976px;">un...</div>
<svg style="left:963.5px;top:842px" width="12" height="12" viewBox="0 0 12 12"><circle cx="6" cy="6" r="5.600" fill="#e51400"/><path d="M1.600 4.300h3.900V2L11.200 6 5.500 10V7.700H1.600z" fill="#ffd31a" stroke="#4a4020" stroke-width="0.700" stroke-linejoin="round"/></svg>
<div class="sb" style="left:1896px;top:819px;width:17px;height:194px;"></div>
<svg style="left:1900px;top:825px" width="9" height="5" viewBox="0 0 9 5"><path d="M0 5h9l-4.5 -5z" fill="#c2c3c9"/></svg>
<svg style="left:1900px;top:1002px" width="9" height="5" viewBox="0 0 9 5"><path d="M0 0h9l-4.5 5z" fill="#c2c3c9"/></svg>
<div style="left:961px;top:1013px;width:61px;height:20px;background:#f7f9fe"></div>
<div class="t ui bt" style="left:966px;top:1015px;color:#1e1e1e;letter-spacing:-0.25px">Call Stack</div>
<div class="ttl" style="left:1024px;top:1014px;width:72px;height:18px;"></div>
<div class="t ui bt w" style="left:1029px;top:1015px;;letter-spacing:-0.08px">Breakpoints</div>
<div class="ttl" style="left:1098px;top:1014px;width:107px;height:18px;"></div>
<div class="t ui bt w" style="left:1103px;top:1015px;;letter-spacing:-0.11px">Exception Settings</div>
<div class="ttl" style="left:1207px;top:1014px;width:114px;height:18px;"></div>
<div class="t ui bt w" style="left:1212px;top:1015px;;letter-spacing:0.15px">Immediate Window</div>
<div class="ttl" style="left:1323px;top:1014px;width:48px;height:18px;"></div>
<div class="t ui bt w" style="left:1328px;top:1015px;;letter-spacing:0.41px">Output</div>
<div class="ttl" style="left:1373px;top:1014px;width:56px;height:18px;"></div>
<div class="t ui bt w" style="left:1378px;top:1015px;;letter-spacing:-0.22px">Error List</div>
<div style="left:0px;top:1040px;width:1920px;height:8px;background:#004175"></div>
<div style="left:100px;top:1040px;width:48px;height:8px;background:#005a9e"></div>
<div style="left:1915px;top:1040px;width:1px;height:8px;background:#7f9dbb"></div>
<div style="left:0;top:1040px;width:1920px;height:8px;overflow:hidden"><div class="t ui" style="left:1818px;top:2px;color:#fff;letter-spacing:-0.51px">12:14</div></div>
</body></html>
